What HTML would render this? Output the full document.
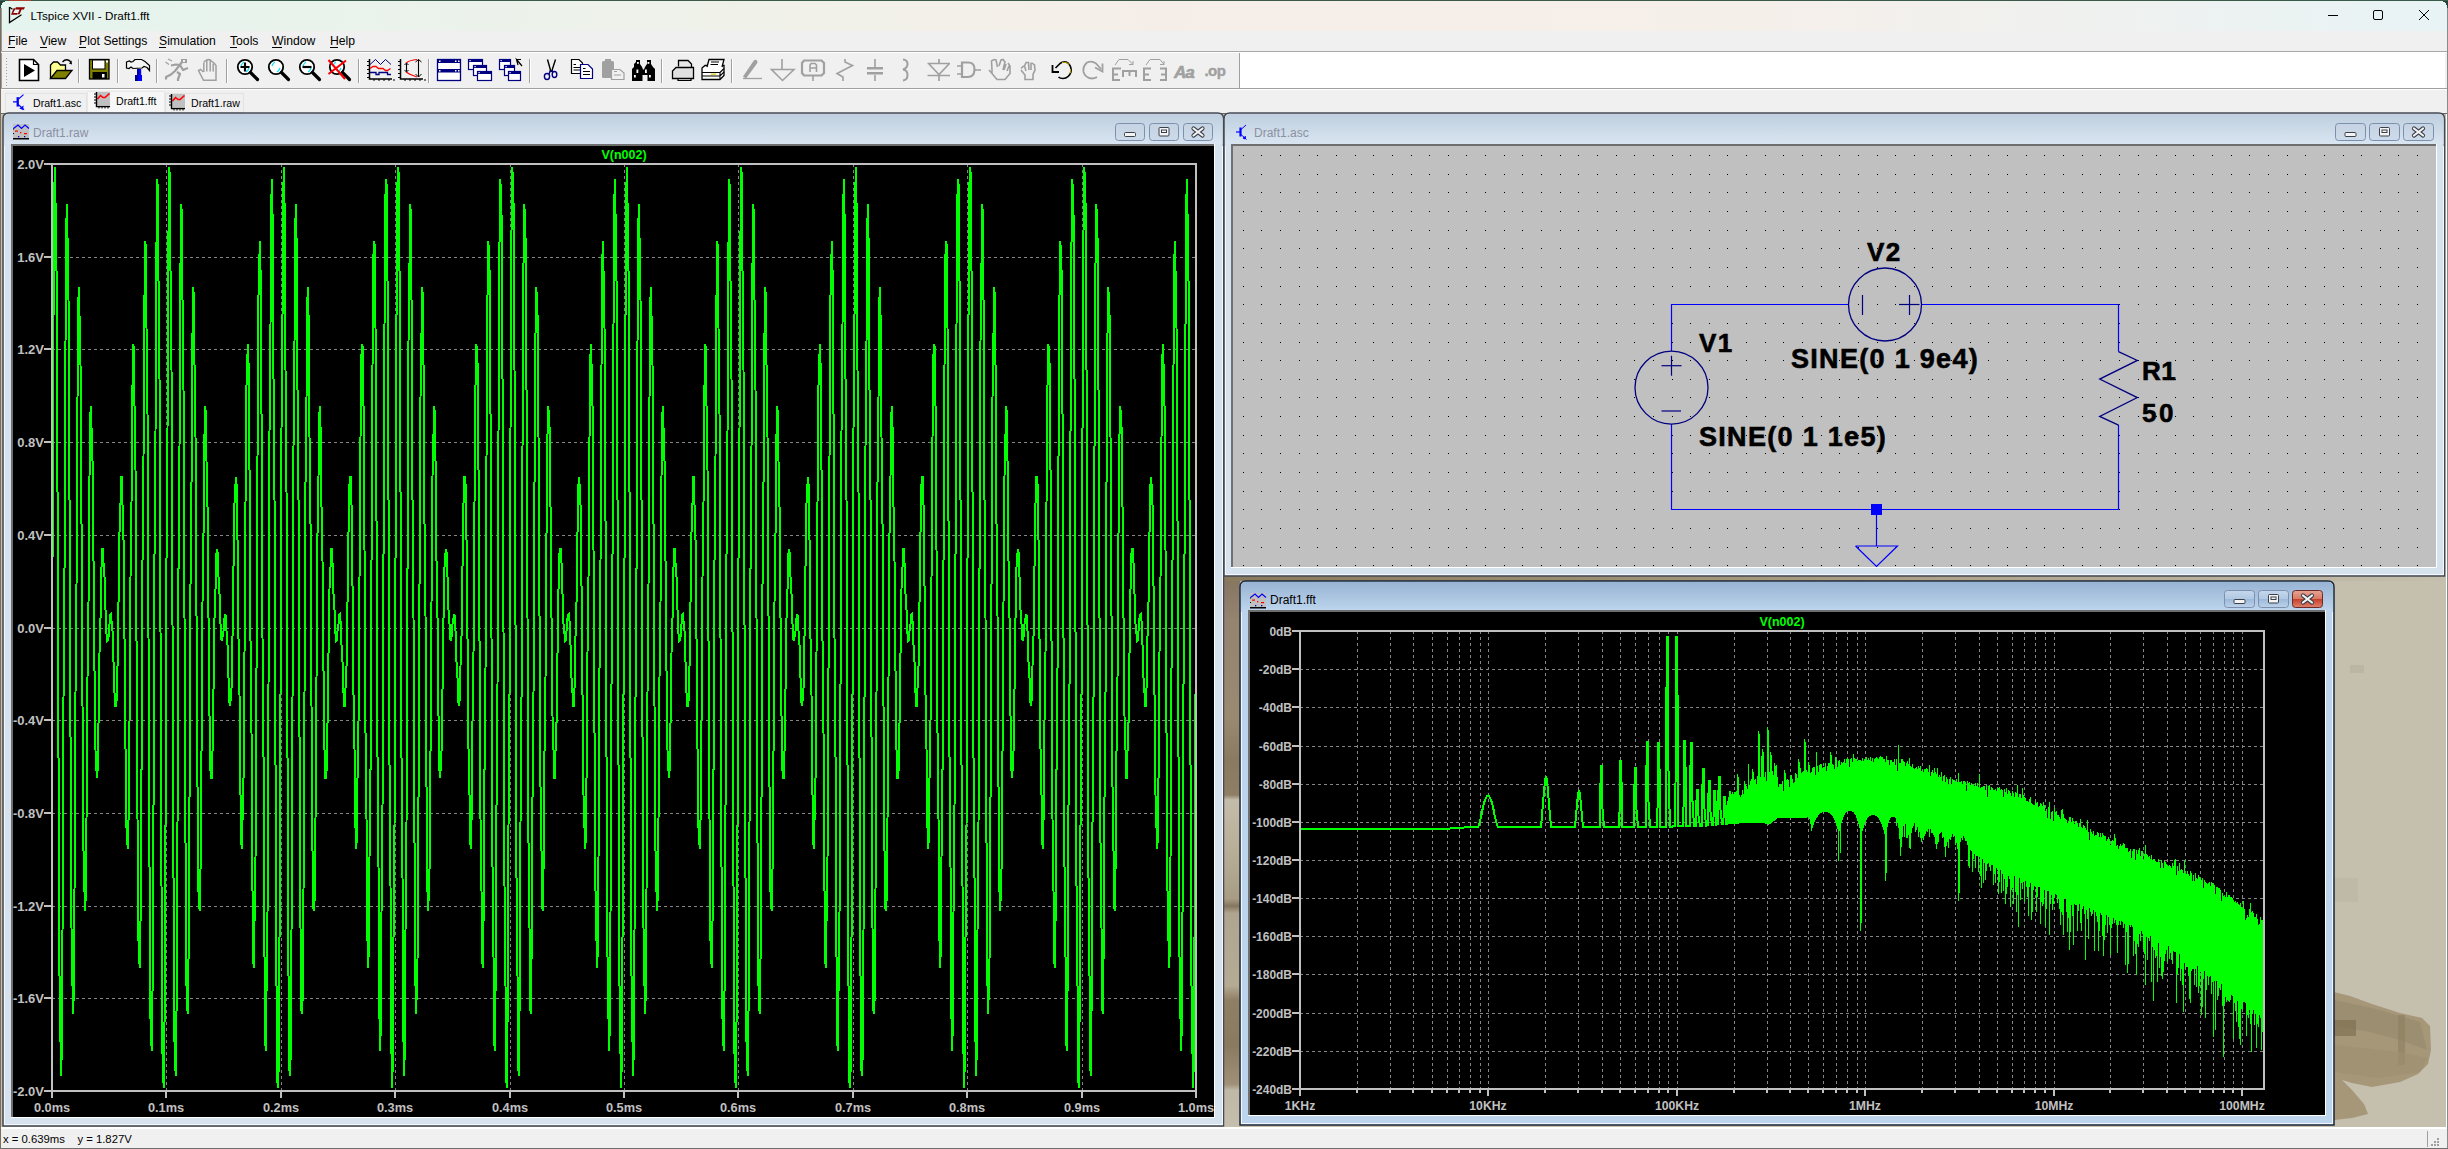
<!DOCTYPE html><html><head><meta charset="utf-8"><style>html,body{margin:0;padding:0;width:2448px;height:1149px;overflow:hidden;background:#26453a}svg{display:block}text{font-family:"Liberation Sans",sans-serif}</style></head><body>
<svg width="2448" height="1149" viewBox="0 0 2448 1149" shape-rendering="crispEdges">
<defs>
<linearGradient id="gTitle" x1="0" x2="1" y1="0" y2="0">
 <stop offset="0" stop-color="#e4f4ee"/><stop offset="0.25" stop-color="#eef2ea"/><stop offset="0.5" stop-color="#f6eee8"/><stop offset="0.72" stop-color="#f5efea"/><stop offset="1" stop-color="#e8f3f5"/>
</linearGradient>
<linearGradient id="gInact" x1="0" x2="0" y1="0" y2="1">
 <stop offset="0" stop-color="#bfcfdf"/><stop offset="1" stop-color="#d9e5f1"/>
</linearGradient>
<linearGradient id="gInactFrame" x1="0" x2="0" y1="0" y2="1">
 <stop offset="0" stop-color="#d2deea"/><stop offset="1" stop-color="#dae6f2"/>
</linearGradient>
<linearGradient id="gAct" x1="0" x2="0" y1="0" y2="1">
 <stop offset="0" stop-color="#98b4d4"/><stop offset="1" stop-color="#bcd4ec"/>
</linearGradient>
<linearGradient id="gBtn" x1="0" x2="0" y1="0" y2="1">
 <stop offset="0" stop-color="#c6d3e2"/><stop offset="1" stop-color="#ccdaea"/>
</linearGradient>
<linearGradient id="gBtnA" x1="0" x2="0" y1="0" y2="1">
 <stop offset="0" stop-color="#c5d8ec"/><stop offset="0.5" stop-color="#b0c8e2"/><stop offset="0.51" stop-color="#9db9d9"/><stop offset="1" stop-color="#bcd2ea"/>
</linearGradient>
<linearGradient id="gClose" x1="0" x2="0" y1="0" y2="1">
 <stop offset="0" stop-color="#e8a596"/><stop offset="0.5" stop-color="#d97a62"/><stop offset="0.51" stop-color="#c5402a"/><stop offset="1" stop-color="#e0826c"/>
</linearGradient>
<pattern id="dots" x="1243" y="155" width="18.64" height="18.64" patternUnits="userSpaceOnUse">
 <rect x="0" y="0" width="2" height="2" fill="#000"/>
</pattern>
</defs>
<rect x="0" y="0" width="2448" height="1" fill="#3a5a4a"/>
<rect x="9.0" y="0" width="22" height="1" fill="#b04030"/>
<path d="M1,8 Q1,1 8,1 L2440,1 Q2447,1 2447,8 L2447,1148 L1,1148 Z" fill="#f0f0f0"/>
<path d="M1,8 Q1,1 8,1 L2440,1 Q2447,1 2447,8 L2447,31 L1,31 Z" fill="url(#gTitle)"/>
<rect x="0" y="8" width="1" height="1141" fill="#7c6e5c"/>
<rect x="1" y="8" width="1" height="1140" fill="#9a9a9a"/>
<rect x="2447" y="8" width="1" height="1141" fill="#8a8a8a"/>
<path d="M9.5,7 V22.5 L21.5,14.8" fill="none" stroke="#000" stroke-width="1.3" shape-rendering="auto"/>
<path d="M9.5,7.2 L12.5,9.2" fill="none" stroke="#000" stroke-width="1.2" shape-rendering="auto"/>
<path d="M13.6,8.2 L15.6,8.2 L13.2,13 L17.8,13 L17.2,14.8 L11,14.8 Z" fill="#8b0000" shape-rendering="auto"/>
<path d="M15.8,7.2 L25,7.2 L23.8,9.4 L21.6,9.4 L19.6,14.2 L17.6,14.2 L19.6,9.4 L15.2,9.4 Z" fill="#8b0000" shape-rendering="auto"/>
<text x="30.5" y="20" font-size="11.7" fill="#000">LTspice XVII - Draft1.fft</text>
<rect x="2328" y="15" width="10" height="1" fill="#000"/>
<rect x="2373.5" y="10.5" width="9" height="9" rx="1.5" fill="none" stroke="#000" stroke-width="1" shape-rendering="auto"/>
<path d="M2419,10 L2429,20 M2429,10 L2419,20" stroke="#000" stroke-width="1" shape-rendering="auto"/>
<text x="8" y="45" font-size="12.2" fill="#000">File</text>
<rect x="8" y="47" width="7" height="1" fill="#000"/>
<text x="40" y="45" font-size="12.2" fill="#000">View</text>
<rect x="40" y="47" width="7" height="1" fill="#000"/>
<text x="79" y="45" font-size="12.2" fill="#000">Plot Settings</text>
<rect x="79" y="47" width="7" height="1" fill="#000"/>
<text x="159" y="45" font-size="12.2" fill="#000">Simulation</text>
<rect x="159" y="47" width="7" height="1" fill="#000"/>
<text x="230" y="45" font-size="12.2" fill="#000">Tools</text>
<rect x="230" y="47" width="7" height="1" fill="#000"/>
<text x="272" y="45" font-size="12.2" fill="#000">Window</text>
<rect x="272" y="47" width="10" height="1" fill="#000"/>
<text x="330" y="45" font-size="12.2" fill="#000">Help</text>
<rect x="330" y="47" width="8" height="1" fill="#000"/>
<rect x="1" y="51" width="2446" height="1" fill="#a8a8a8"/>
<rect x="1" y="52" width="2446" height="1" fill="#ffffff"/>
<rect x="1" y="88" width="2446" height="1" fill="#a0a0a0"/>
<rect x="1" y="89" width="2446" height="1" fill="#ffffff"/>
<rect x="1240" y="52" width="1205" height="36" fill="#ffffff"/>
<rect x="1239" y="53" width="1" height="35" fill="#a0a0a0"/>
<rect x="6" y="58" width="1" height="1" fill="#a0a0a0"/>
<rect x="6" y="61" width="1" height="1" fill="#a0a0a0"/>
<rect x="6" y="64" width="1" height="1" fill="#a0a0a0"/>
<rect x="6" y="67" width="1" height="1" fill="#a0a0a0"/>
<rect x="6" y="70" width="1" height="1" fill="#a0a0a0"/>
<rect x="6" y="73" width="1" height="1" fill="#a0a0a0"/>
<rect x="6" y="76" width="1" height="1" fill="#a0a0a0"/>
<rect x="6" y="79" width="1" height="1" fill="#a0a0a0"/>
<rect x="6" y="82" width="1" height="1" fill="#a0a0a0"/>
<rect x="6" y="85" width="1" height="1" fill="#a0a0a0"/>
<rect x="78" y="59" width="1" height="24" fill="#a0a0a0"/>
<rect x="79" y="59" width="1" height="24" fill="#ffffff"/>
<rect x="117" y="59" width="1" height="24" fill="#a0a0a0"/>
<rect x="118" y="59" width="1" height="24" fill="#ffffff"/>
<rect x="156" y="59" width="1" height="24" fill="#a0a0a0"/>
<rect x="157" y="59" width="1" height="24" fill="#ffffff"/>
<rect x="226" y="59" width="1" height="24" fill="#a0a0a0"/>
<rect x="227" y="59" width="1" height="24" fill="#ffffff"/>
<rect x="358" y="59" width="1" height="24" fill="#a0a0a0"/>
<rect x="359" y="59" width="1" height="24" fill="#ffffff"/>
<rect x="428" y="59" width="1" height="24" fill="#a0a0a0"/>
<rect x="429" y="59" width="1" height="24" fill="#ffffff"/>
<rect x="529" y="59" width="1" height="24" fill="#a0a0a0"/>
<rect x="530" y="59" width="1" height="24" fill="#ffffff"/>
<rect x="661" y="59" width="1" height="24" fill="#a0a0a0"/>
<rect x="662" y="59" width="1" height="24" fill="#ffffff"/>
<rect x="731" y="59" width="1" height="24" fill="#a0a0a0"/>
<rect x="732" y="59" width="1" height="24" fill="#ffffff"/>
<rect x="1" y="90" width="2446" height="23" fill="#f0f0f0"/>
<rect x="1" y="113" width="2446" height="1" fill="#6a6a6a"/>
<rect x="5" y="93" width="81" height="19" fill="#f0f0f0" stroke="#e2e2e2"/>
<rect x="87" y="91" width="77" height="21" fill="#f7f7f7" stroke="#e8e8e8"/>
<rect x="165" y="93" width="78" height="19" fill="#f0f0f0" stroke="#e2e2e2"/>
<text x="33" y="107" font-size="10.6" fill="#000">Draft1.asc</text>
<text x="116" y="105" font-size="10.6" fill="#000">Draft1.fft</text>
<text x="191" y="107" font-size="10.6" fill="#000">Draft1.raw</text>
<defs><linearGradient id="gStrip" x1="0" x2="0" y1="0" y2="1">
<stop offset="0" stop-color="#857560"/><stop offset="0.08" stop-color="#948470"/><stop offset="0.255" stop-color="#9a8a72"/>
<stop offset="0.335" stop-color="#8a7a62"/><stop offset="0.398" stop-color="#8e7e66"/><stop offset="0.407" stop-color="#c4bcaa"/>
<stop offset="0.5" stop-color="#b8ae98"/><stop offset="0.587" stop-color="#a89c84"/><stop offset="0.6" stop-color="#857560"/>
<stop offset="0.613" stop-color="#b0a590"/><stop offset="0.745" stop-color="#b5aa94"/><stop offset="0.771" stop-color="#8f7f65"/>
<stop offset="0.853" stop-color="#8a7a60"/><stop offset="0.924" stop-color="#a09078"/><stop offset="0.935" stop-color="#c0b8a6"/><stop offset="1" stop-color="#c4bead"/></linearGradient>
<linearGradient id="gStripH" x1="0" x2="1" y1="0" y2="0">
<stop offset="0" stop-color="#8a7a5e"/><stop offset="0.3" stop-color="#9c8e74"/><stop offset="0.6" stop-color="#b0a48c"/><stop offset="1" stop-color="#c4bead"/></linearGradient>
<radialGradient id="gBlob" cx="0.5" cy="0.5" r="0.5"><stop offset="0" stop-color="#8a7a5a"/><stop offset="0.7" stop-color="#9c8d6e"/><stop offset="1" stop-color="#b5aa90"/></radialGradient>
</defs>
<rect x="1" y="114" width="2446" height="1013" fill="#c5bfae"/>
<rect x="1224" y="576" width="16" height="550" fill="url(#gStrip)"/>
<rect x="2446" y="114" width="1" height="1013" fill="#ffffff"/>
<rect x="1225" y="576" width="1220" height="5" fill="url(#gStripH)"/>
<path d="M2334,992 L2350,996 L2372,1004 L2400,1013 L2422,1018 L2430,1026 L2431,1050 L2428,1064 L2418,1074 L2400,1082 L2372,1087 L2352,1083 L2342,1080 L2352,1090 L2364,1104 L2368,1114 L2352,1118 L2334,1120 Z" fill="#a69779" shape-rendering="auto"/>
<path d="M2334,1000 L2372,1008 L2400,1016 L2420,1022 L2427,1050 L2400,1040 L2370,1032 L2334,1026 Z" fill="#998a6c" opacity="0.7" shape-rendering="auto"/>
<rect x="2334" y="1020" width="22" height="16" fill="#7c6a4c" opacity="0.6" shape-rendering="auto"/>
<rect x="2398" y="1015" width="7" height="50" fill="#8a7a5c" opacity="0.5" shape-rendering="auto"/>
<path d="M2334,1045 L2400,1052 L2428,1058 L2420,1072 L2380,1078 L2334,1072 Z" fill="#9e8f70" opacity="0.6" shape-rendering="auto"/>
<rect x="2334" y="878" width="24" height="24" fill="#bbb5a4" opacity="0.6" shape-rendering="auto"/>
<rect x="2350" y="665" width="14" height="8" fill="#b2ab9a" opacity="0.5"/>
<rect x="1" y="1127" width="2446" height="2" fill="#ffffff"/>
<rect x="1" y="1129" width="2446" height="19" fill="#f0f0f0"/>
<rect x="0" y="1148" width="2448" height="1" fill="#6e6e6e"/>
<rect x="2427" y="1131" width="1" height="16" fill="#a0a0a0"/>
<text x="3" y="1143" font-size="11.3" fill="#000" xml:space="preserve">x = 0.639ms    y = 1.827V</text>
<rect x="2431" y="1144" width="2" height="2" fill="#a0a0a0"/>
<rect x="2434" y="1141" width="2" height="2" fill="#a0a0a0"/>
<rect x="2434" y="1144" width="2" height="2" fill="#a0a0a0"/>
<rect x="2437" y="1138" width="2" height="2" fill="#a0a0a0"/>
<rect x="2437" y="1141" width="2" height="2" fill="#a0a0a0"/>
<rect x="2437" y="1144" width="2" height="2" fill="#a0a0a0"/>
<path d="M3,1126 L3,119 Q3,113 9,113 L1217.5,113 Q1223.5,113 1223.5,119 L1223.5,1126 Z" fill="#d6e2ee" stroke="#454a52" stroke-width="1.5" shape-rendering="auto"/>
<path d="M4,144 L4,119 Q4,114 10,114 L1216.5,114 Q1222.5,114 1222.5,119 L1222.5,144 Z" fill="url(#gInact)" shape-rendering="auto"/>
<path d="M4.5,1125 L4.5,146" stroke="#f4f8fc" stroke-width="1" fill="none"/>
<path d="M1222.0,1125 L1222.0,146" stroke="#f4f8fc" stroke-width="1" fill="none"/>
<path d="M4.5,1124.5 L1222.0,1124.5" stroke="#f4f8fc" stroke-width="1" fill="none"/>
<rect x="11" y="144" width="1204" height="2" fill="#6e6e6e"/>
<rect x="11" y="144" width="2" height="973" fill="#707070"/>
<rect x="1214" y="144" width="1" height="974" fill="#ffffff"/>
<rect x="11" y="1117" width="1204" height="1" fill="#ffffff"/>
<rect x="13" y="146" width="1201" height="971" fill="#000"/>
<g transform="translate(13,124)" shape-rendering="auto"><rect x="0" y="0" width="16" height="14" fill="#c0c0c0"/><path d="M0.5,4.5 L5,1 L8.5,4.5 L12,1 L16,4.5" fill="none" stroke="#0000ff" stroke-width="1.2"/><rect x="2" y="6.5" width="3" height="1.2" fill="#ff0000"/><rect x="7" y="8" width="1.3" height="1.3" fill="#ff0000"/><rect x="11" y="9" width="3" height="1.2" fill="#ff0000"/><rect x="5" y="12" width="1.3" height="1.3" fill="#0000aa"/><rect x="11" y="12" width="1.3" height="1.3" fill="#0000aa"/><rect x="0" y="4.5" width="1" height="1" fill="#000"/><rect x="0" y="9" width="1" height="1" fill="#000"/><rect x="0" y="14" width="16" height="1.5" fill="#000"/></g>
<rect x="1115.5" y="123.5" width="29" height="17" rx="3" fill="url(#gBtn)" stroke="#7d8fae" stroke-width="1" shape-rendering="auto"/>
<rect x="1124.5" y="132.5" width="11" height="4" rx="1" fill="#f4f4f4" stroke="#3a3f4a" stroke-width="1" shape-rendering="auto"/>
<rect x="1149.5" y="123.5" width="29" height="17" rx="3" fill="url(#gBtn)" stroke="#7d8fae" stroke-width="1" shape-rendering="auto"/>
<rect x="1159.0" y="127.5" width="10" height="8.5" rx="1" fill="#f4f4f4" stroke="#3a3f4a" stroke-width="1" shape-rendering="auto"/>
<rect x="1161.5" y="130.0" width="5" height="2.5" fill="none" stroke="#3a3f4a" stroke-width="1" shape-rendering="auto"/>
<rect x="1183.5" y="123.5" width="29" height="17" rx="3" fill="url(#gBtn)" stroke="#7d8fae" stroke-width="1" shape-rendering="auto"/>
<path d="M1193.5,128.5 L1202.5,135.5 M1202.5,128.5 L1193.5,135.5" stroke="#3a3f4a" stroke-width="4.2" stroke-linecap="round" shape-rendering="auto"/>
<path d="M1193.5,128.5 L1202.5,135.5 M1202.5,128.5 L1193.5,135.5" stroke="#f4f4f4" stroke-width="2.2" stroke-linecap="round" shape-rendering="auto"/>
<text x="33" y="137" font-size="12" fill="#8c90a0">Draft1.raw</text>
<path d="M1224,576 L1224,119 Q1224,113 1230,113 L2438.5,113 Q2444.5,113 2444.5,119 L2444.5,576 Z" fill="#d6e2ee" stroke="#454a52" stroke-width="1.5" shape-rendering="auto"/>
<path d="M1225,144 L1225,119 Q1225,114 1231,114 L2437.5,114 Q2443.5,114 2443.5,119 L2443.5,144 Z" fill="url(#gInact)" shape-rendering="auto"/>
<path d="M1225.5,575 L1225.5,146" stroke="#f4f8fc" stroke-width="1" fill="none"/>
<path d="M2443.0,575 L2443.0,146" stroke="#f4f8fc" stroke-width="1" fill="none"/>
<path d="M1225.5,574.5 L2443.0,574.5" stroke="#f4f8fc" stroke-width="1" fill="none"/>
<rect x="1231" y="144" width="1206" height="2" fill="#6e6e6e"/>
<rect x="1231" y="144" width="2" height="423" fill="#707070"/>
<rect x="2436" y="144" width="1" height="424" fill="#ffffff"/>
<rect x="1231" y="567" width="1206" height="1" fill="#ffffff"/>
<rect x="1233" y="146" width="1203" height="421" fill="#c0c0c0"/>
<g transform="translate(1236,124.5) scale(1)" shape-rendering="auto" stroke="#0000ff" fill="none"><path d="M0,7.5 L4,7.5" stroke-width="1.2"/><path d="M4.5,3 L4.5,12" stroke-width="2.2"/><path d="M5,5 L10,0.5" stroke-width="1"/><path d="M5,10 L10.5,15" stroke-width="1"/><path d="M7,13.5 L9.5,12 L9,14.5 Z" fill="#0000ff" stroke-width="1"/></g>
<rect x="2335.5" y="123.5" width="30" height="17" rx="3" fill="url(#gBtn)" stroke="#7d8fae" stroke-width="1" shape-rendering="auto"/>
<rect x="2345.0" y="132.5" width="11" height="4" rx="1" fill="#f4f4f4" stroke="#3a3f4a" stroke-width="1" shape-rendering="auto"/>
<rect x="2369.5" y="123.5" width="30" height="17" rx="3" fill="url(#gBtn)" stroke="#7d8fae" stroke-width="1" shape-rendering="auto"/>
<rect x="2379.5" y="127.5" width="10" height="8.5" rx="1" fill="#f4f4f4" stroke="#3a3f4a" stroke-width="1" shape-rendering="auto"/>
<rect x="2382.0" y="130.0" width="5" height="2.5" fill="none" stroke="#3a3f4a" stroke-width="1" shape-rendering="auto"/>
<rect x="2403.5" y="123.5" width="30" height="17" rx="3" fill="url(#gBtn)" stroke="#7d8fae" stroke-width="1" shape-rendering="auto"/>
<path d="M2414.0,128.5 L2423.0,135.5 M2423.0,128.5 L2414.0,135.5" stroke="#3a3f4a" stroke-width="4.2" stroke-linecap="round" shape-rendering="auto"/>
<path d="M2414.0,128.5 L2423.0,135.5 M2423.0,128.5 L2414.0,135.5" stroke="#f4f4f4" stroke-width="2.2" stroke-linecap="round" shape-rendering="auto"/>
<text x="1254" y="137" font-size="12" fill="#8c90a0">Draft1.asc</text>
<path d="M1240,1125 L1240,587 Q1240,581 1246,581 L2328,581 Q2334,581 2334,587 L2334,1125 Z" fill="#bcd4ec" stroke="#1e2a3a" stroke-width="1.5" shape-rendering="auto"/>
<path d="M1241,610 L1241,587 Q1241,582 1247,582 L2327,582 Q2333,582 2333,587 L2333,610 Z" fill="url(#gAct)" shape-rendering="auto"/>
<path d="M1241.5,1124 L1241.5,612" stroke="#f4f8fc" stroke-width="1" fill="none"/>
<path d="M2332.5,1124 L2332.5,612" stroke="#f4f8fc" stroke-width="1" fill="none"/>
<path d="M1241.5,1123.5 L2332.5,1123.5" stroke="#f4f8fc" stroke-width="1" fill="none"/>
<rect x="1248" y="610" width="1078" height="2" fill="#6e6e6e"/>
<rect x="1248" y="610" width="2" height="505" fill="#707070"/>
<rect x="2325" y="610" width="1" height="506" fill="#ffffff"/>
<rect x="1248" y="1115" width="1078" height="1" fill="#ffffff"/>
<rect x="1250" y="612" width="1075" height="503" fill="#000"/>
<g transform="translate(1250,593)" shape-rendering="auto"><rect x="0" y="0" width="16" height="14" fill="#c0c0c0"/><path d="M0.5,4.5 L5,1 L8.5,4.5 L12,1 L16,4.5" fill="none" stroke="#0000ff" stroke-width="1.2"/><rect x="2" y="6.5" width="3" height="1.2" fill="#ff0000"/><rect x="7" y="8" width="1.3" height="1.3" fill="#ff0000"/><rect x="11" y="9" width="3" height="1.2" fill="#ff0000"/><rect x="5" y="12" width="1.3" height="1.3" fill="#0000aa"/><rect x="11" y="12" width="1.3" height="1.3" fill="#0000aa"/><rect x="0" y="4.5" width="1" height="1" fill="#000"/><rect x="0" y="9" width="1" height="1" fill="#000"/><rect x="0" y="14" width="16" height="1.5" fill="#000"/></g>
<rect x="2224.5" y="590.5" width="30" height="17" rx="3" fill="url(#gBtnA)" stroke="#7d8fae" stroke-width="1" shape-rendering="auto"/>
<rect x="2234.0" y="599.5" width="11" height="4" rx="1" fill="#f4f4f4" stroke="#3a3f4a" stroke-width="1" shape-rendering="auto"/>
<rect x="2258.5" y="590.5" width="30" height="17" rx="3" fill="url(#gBtnA)" stroke="#7d8fae" stroke-width="1" shape-rendering="auto"/>
<rect x="2268.5" y="594.5" width="10" height="8.5" rx="1" fill="#f4f4f4" stroke="#3a3f4a" stroke-width="1" shape-rendering="auto"/>
<rect x="2271.0" y="597.0" width="5" height="2.5" fill="none" stroke="#3a3f4a" stroke-width="1" shape-rendering="auto"/>
<rect x="2292.5" y="590.5" width="30" height="17" rx="3" fill="url(#gClose)" stroke="#6b2a2a" stroke-width="1" shape-rendering="auto"/>
<path d="M2303.0,595.5 L2312.0,602.5 M2312.0,595.5 L2303.0,602.5" stroke="#3a3f4a" stroke-width="4.2" stroke-linecap="round" shape-rendering="auto"/>
<path d="M2303.0,595.5 L2312.0,602.5 M2312.0,595.5 L2303.0,602.5" stroke="#f4f4f4" stroke-width="2.2" stroke-linecap="round" shape-rendering="auto"/>
<text x="1270" y="604" font-size="12" fill="#000">Draft1.fft</text>
<g transform="translate(13,94) scale(1.05)" shape-rendering="auto" stroke="#0000ff" fill="none"><path d="M0,7.5 L4,7.5" stroke-width="1.2"/><path d="M4.5,3 L4.5,12" stroke-width="2.2"/><path d="M5,5 L10,0.5" stroke-width="1"/><path d="M5,10 L10.5,15" stroke-width="1"/><path d="M7,13.5 L9.5,12 L9,14.5 Z" fill="#0000ff" stroke-width="1"/></g>
<g transform="translate(94,92)" shape-rendering="auto"><rect x="3" y="0" width="13" height="13" fill="#c0c0c0"/><path d="M3.5,7 L6.5,3.5 L9,5.5 L11,5.5 L15.5,1.5" fill="none" stroke="#ff0000" stroke-width="1.6"/><path d="M2.5,0 V14.5 H16" fill="none" stroke="#000" stroke-width="1.4"/><path d="M0,2 H2 M0,5 H2 M0,8 H2 M0,11 H2 M5,15 V16.5 M8,15 V16.5 M11,15 V16.5 M14,15 V16.5" stroke="#000" stroke-width="1"/></g>
<g transform="translate(169,94)" shape-rendering="auto"><rect x="3" y="0" width="13" height="13" fill="#c0c0c0"/><path d="M3.5,7 L6.5,3.5 L9,5.5 L11,5.5 L15.5,1.5" fill="none" stroke="#ff0000" stroke-width="1.6"/><path d="M2.5,0 V14.5 H16" fill="none" stroke="#000" stroke-width="1.4"/><path d="M0,2 H2 M0,5 H2 M0,8 H2 M0,11 H2 M5,15 V16.5 M8,15 V16.5 M11,15 V16.5 M14,15 V16.5" stroke="#000" stroke-width="1"/></g>
<line x1="52" y1="257.5" x2="1196" y2="257.5" stroke="#868686" stroke-width="1" stroke-dasharray="3 3"/>
<line x1="52" y1="349.5" x2="1196" y2="349.5" stroke="#868686" stroke-width="1" stroke-dasharray="3 3"/>
<line x1="52" y1="442.5" x2="1196" y2="442.5" stroke="#868686" stroke-width="1" stroke-dasharray="3 3"/>
<line x1="52" y1="535.5" x2="1196" y2="535.5" stroke="#868686" stroke-width="1" stroke-dasharray="3 3"/>
<line x1="52" y1="628.5" x2="1196" y2="628.5" stroke="#868686" stroke-width="1" stroke-dasharray="3 3"/>
<line x1="52" y1="720.5" x2="1196" y2="720.5" stroke="#868686" stroke-width="1" stroke-dasharray="3 3"/>
<line x1="52" y1="813.5" x2="1196" y2="813.5" stroke="#868686" stroke-width="1" stroke-dasharray="3 3"/>
<line x1="52" y1="906.5" x2="1196" y2="906.5" stroke="#868686" stroke-width="1" stroke-dasharray="3 3"/>
<line x1="52" y1="998.5" x2="1196" y2="998.5" stroke="#868686" stroke-width="1" stroke-dasharray="3 3"/>
<line x1="166.5" y1="164" x2="166.5" y2="1091" stroke="#868686" stroke-width="1" stroke-dasharray="3 3"/>
<line x1="281.5" y1="164" x2="281.5" y2="1091" stroke="#868686" stroke-width="1" stroke-dasharray="3 3"/>
<line x1="395.5" y1="164" x2="395.5" y2="1091" stroke="#868686" stroke-width="1" stroke-dasharray="3 3"/>
<line x1="510.5" y1="164" x2="510.5" y2="1091" stroke="#868686" stroke-width="1" stroke-dasharray="3 3"/>
<line x1="624.5" y1="164" x2="624.5" y2="1091" stroke="#868686" stroke-width="1" stroke-dasharray="3 3"/>
<line x1="738.5" y1="164" x2="738.5" y2="1091" stroke="#868686" stroke-width="1" stroke-dasharray="3 3"/>
<line x1="853.5" y1="164" x2="853.5" y2="1091" stroke="#868686" stroke-width="1" stroke-dasharray="3 3"/>
<line x1="967.5" y1="164" x2="967.5" y2="1091" stroke="#868686" stroke-width="1" stroke-dasharray="3 3"/>
<line x1="1082.5" y1="164" x2="1082.5" y2="1091" stroke="#868686" stroke-width="1" stroke-dasharray="3 3"/>
<path d="M52,628 L53,491 L53,367 L54,266 L54,197 L55,167 L55,177 L56,227 L57,313 L57,426 L58,556 L58,692 L59,821 L59,933 L60,1017 L61,1066 L61,1076 L62,1046 L62,979 L63,882 L63,764 L64,634 L65,506 L65,389 L66,295 L66,232 L67,204 L67,214 L68,260 L69,338 L69,440 L70,557 L70,678 L71,793 L71,891 L72,964 L73,1007 L73,1014 L74,988 L74,931 L75,848 L75,748 L76,639 L77,532 L77,436 L78,359 L78,308 L79,287 L79,296 L80,333 L81,396 L81,477 L82,568 L82,662 L83,749 L83,823 L84,877 L85,907 L85,911 L86,891 L86,848 L87,788 L87,716 L88,639 L89,566 L89,501 L90,451 L90,418 L91,406 L91,414 L92,440 L93,481 L93,532 L94,589 L94,645 L95,695 L95,736 L96,764 L97,778 L98,764 L98,739 L99,707 L99,671 L100,635 L101,602 L101,576 L102,558 L102,549 L103,549 L103,556 L104,569 L105,585 L105,602 L106,618 L106,630 L107,638 L107,641 L108,640 L109,634 L109,628 L110,621 L110,615 L111,614 L111,617 L112,625 L113,637 L113,653 L114,670 L114,686 L115,699 L115,706 L116,706 L117,697 L117,679 L118,653 L118,620 L119,584 L119,548 L120,516 L121,491 L121,477 L122,477 L122,491 L123,519 L124,560 L124,610 L125,666 L125,723 L126,774 L126,815 L127,841 L128,849 L128,837 L129,804 L129,754 L130,689 L130,616 L131,539 L132,467 L132,407 L133,364 L133,344 L134,348 L134,378 L135,432 L136,506 L136,593 L137,687 L137,778 L138,859 L138,922 L139,959 L140,968 L140,947 L141,896 L141,819 L142,723 L142,616 L143,507 L144,407 L144,324 L145,267 L145,241 L146,248 L146,291 L147,364 L148,462 L148,577 L149,698 L149,815 L150,917 L150,995 L151,1041 L152,1051 L152,1023 L153,960 L153,866 L154,749 L154,621 L155,491 L156,373 L156,276 L157,209 L157,179 L158,189 L158,238 L159,322 L160,434 L160,563 L161,699 L161,829 L162,942 L162,1028 L163,1078 L164,1088 L164,1058 L165,989 L165,888 L166,764 L166,628 L167,491 L168,367 L168,266 L169,197 L169,167 L170,177 L170,227 L171,313 L172,426 L172,556 L173,692 L173,821 L174,933 L174,1017 L175,1066 L176,1076 L176,1046 L177,979 L177,882 L178,764 L178,634 L179,506 L180,389 L180,295 L181,232 L181,204 L182,214 L182,260 L183,338 L184,440 L184,557 L185,678 L185,793 L186,891 L186,964 L187,1007 L188,1014 L188,988 L189,931 L189,848 L190,748 L190,639 L191,532 L192,436 L192,359 L193,308 L193,287 L194,296 L194,333 L195,396 L196,477 L196,568 L197,662 L197,749 L198,823 L198,877 L199,907 L200,911 L200,891 L201,848 L201,788 L202,716 L202,639 L203,566 L204,501 L204,451 L205,418 L205,406 L206,414 L206,440 L207,481 L208,532 L208,589 L209,645 L209,695 L210,736 L210,764 L211,778 L212,778 L212,764 L213,739 L213,707 L214,671 L214,635 L215,602 L216,576 L216,558 L217,549 L218,556 L218,569 L219,585 L220,602 L220,618 L221,630 L221,638 L222,641 L222,640 L223,634 L224,628 L224,621 L225,615 L225,614 L226,617 L226,625 L227,637 L228,653 L228,670 L229,686 L229,699 L230,706 L231,697 L232,679 L232,653 L233,620 L233,584 L234,548 L234,516 L235,491 L236,477 L237,491 L237,519 L238,560 L238,610 L239,666 L240,723 L240,774 L241,815 L241,841 L242,849 L242,837 L243,804 L244,754 L244,689 L245,616 L245,539 L246,467 L246,407 L247,364 L248,344 L248,348 L249,378 L249,432 L250,506 L250,593 L251,687 L252,778 L252,859 L253,922 L253,959 L254,968 L254,947 L255,896 L256,819 L256,723 L257,616 L257,507 L258,407 L258,324 L259,267 L260,241 L260,248 L261,291 L261,364 L262,462 L262,577 L263,698 L264,815 L264,917 L265,995 L265,1041 L266,1051 L266,1023 L267,960 L268,866 L268,749 L269,621 L269,491 L270,373 L271,276 L271,209 L272,179 L272,189 L273,238 L273,322 L274,434 L275,563 L275,699 L276,829 L276,942 L277,1028 L277,1078 L278,1088 L279,1058 L279,989 L280,888 L280,764 L281,628 L281,491 L282,367 L283,266 L283,197 L284,167 L284,177 L285,227 L285,313 L286,426 L287,556 L287,692 L288,821 L288,933 L289,1017 L289,1066 L290,1076 L291,1046 L291,979 L292,882 L292,764 L293,634 L293,506 L294,389 L295,295 L295,232 L296,204 L296,214 L297,260 L297,338 L298,440 L299,557 L299,678 L300,793 L300,891 L301,964 L301,1007 L302,1014 L303,988 L303,931 L304,848 L304,748 L305,639 L305,532 L306,436 L307,359 L307,308 L308,287 L308,296 L309,333 L309,396 L310,477 L311,568 L311,662 L312,749 L312,823 L313,877 L313,907 L314,911 L315,891 L315,848 L316,788 L316,716 L317,639 L317,566 L318,501 L319,451 L319,418 L320,406 L320,414 L321,440 L321,481 L322,532 L323,589 L323,645 L324,695 L324,736 L325,764 L325,778 L326,778 L327,764 L327,739 L328,707 L328,671 L329,635 L329,602 L330,576 L331,558 L331,549 L332,549 L332,556 L333,569 L333,585 L334,602 L335,618 L335,630 L336,638 L336,641 L337,640 L337,634 L338,628 L339,621 L339,615 L340,614 L340,617 L341,625 L341,637 L342,653 L343,670 L343,686 L344,699 L344,706 L345,706 L345,697 L346,679 L347,653 L347,620 L348,584 L348,548 L349,516 L349,491 L350,477 L351,477 L351,491 L352,519 L352,560 L353,610 L353,666 L354,723 L355,774 L355,815 L356,841 L356,849 L357,837 L357,804 L358,754 L359,689 L359,616 L360,539 L360,467 L361,407 L361,364 L362,344 L363,348 L363,378 L364,432 L364,506 L365,593 L365,687 L366,778 L367,859 L367,922 L368,959 L368,968 L369,947 L369,896 L370,819 L371,723 L371,616 L372,507 L372,407 L373,324 L373,267 L374,241 L375,248 L375,291 L376,364 L376,462 L377,577 L377,698 L378,815 L379,917 L379,995 L380,1041 L380,1051 L381,1023 L381,960 L382,866 L383,749 L383,621 L384,491 L384,373 L385,276 L385,209 L386,179 L387,189 L387,238 L388,322 L388,434 L389,563 L389,699 L390,829 L391,942 L391,1028 L392,1078 L392,1088 L393,1058 L393,989 L394,888 L395,764 L395,628 L396,491 L396,367 L397,266 L397,197 L398,167 L399,177 L399,227 L400,313 L400,426 L401,556 L401,692 L402,821 L403,933 L403,1017 L404,1066 L404,1076 L405,1046 L405,979 L406,882 L407,764 L407,634 L408,506 L408,389 L409,295 L410,232 L410,204 L411,214 L411,260 L412,338 L412,440 L413,557 L414,678 L414,793 L415,891 L415,964 L416,1007 L416,1014 L417,988 L418,931 L418,848 L419,748 L419,639 L420,532 L420,436 L421,359 L422,308 L422,287 L423,296 L423,333 L424,396 L424,477 L425,568 L426,662 L426,749 L427,823 L427,877 L428,907 L428,911 L429,891 L430,848 L430,788 L431,716 L431,639 L432,566 L432,501 L433,451 L434,418 L434,406 L435,414 L435,440 L436,481 L436,532 L437,589 L438,645 L438,695 L439,736 L439,764 L440,778 L441,764 L442,739 L442,707 L443,671 L443,635 L444,602 L444,576 L445,558 L446,549 L447,556 L447,569 L448,585 L448,602 L449,618 L450,630 L450,638 L451,641 L451,640 L452,634 L452,628 L453,621 L454,615 L454,614 L455,617 L455,625 L456,637 L456,653 L457,670 L458,686 L458,699 L459,706 L460,697 L460,679 L461,653 L462,620 L462,584 L463,548 L463,516 L464,491 L464,477 L465,477 L466,491 L466,519 L467,560 L467,610 L468,666 L468,723 L469,774 L470,815 L470,841 L471,849 L471,837 L472,804 L472,754 L473,689 L474,616 L474,539 L475,467 L475,407 L476,364 L476,344 L477,348 L478,378 L478,432 L479,506 L479,593 L480,687 L480,778 L481,859 L482,922 L482,959 L483,968 L483,947 L484,896 L484,819 L485,723 L486,616 L486,507 L487,407 L487,324 L488,267 L488,241 L489,248 L490,291 L490,364 L491,462 L491,577 L492,698 L492,815 L493,917 L494,995 L494,1041 L495,1051 L495,1023 L496,960 L496,866 L497,749 L498,621 L498,491 L499,373 L499,276 L500,209 L500,179 L501,189 L502,238 L502,322 L503,434 L503,563 L504,699 L504,829 L505,942 L506,1028 L506,1078 L507,1088 L507,1058 L508,989 L508,888 L509,764 L510,628 L510,491 L511,367 L511,266 L512,197 L512,167 L513,177 L514,227 L514,313 L515,426 L515,556 L516,692 L516,821 L517,933 L518,1017 L518,1066 L519,1076 L519,1046 L520,979 L520,882 L521,764 L522,634 L522,506 L523,389 L523,295 L524,232 L524,204 L525,214 L526,260 L526,338 L527,440 L527,557 L528,678 L528,793 L529,891 L530,964 L530,1007 L531,1014 L531,988 L532,931 L532,848 L533,748 L534,639 L534,532 L535,436 L535,359 L536,308 L536,287 L537,296 L538,333 L538,396 L539,477 L539,568 L540,662 L540,749 L541,823 L542,877 L542,907 L543,911 L543,891 L544,848 L544,788 L545,716 L546,639 L546,566 L547,501 L547,451 L548,418 L548,406 L549,414 L550,440 L550,481 L551,532 L551,589 L552,645 L552,695 L553,736 L554,764 L554,778 L555,778 L555,764 L556,739 L557,707 L557,671 L558,635 L558,602 L559,576 L559,558 L560,549 L561,549 L561,556 L562,569 L562,585 L563,602 L563,618 L564,630 L565,638 L565,641 L566,640 L566,634 L567,628 L567,621 L568,615 L569,614 L569,617 L570,625 L570,637 L571,653 L571,670 L572,686 L573,699 L573,706 L574,706 L574,697 L575,679 L575,653 L576,620 L577,584 L577,548 L578,516 L578,491 L579,477 L580,491 L581,519 L581,560 L582,610 L582,666 L583,723 L583,774 L584,815 L585,841 L585,849 L586,837 L586,804 L587,754 L587,689 L588,616 L589,539 L589,467 L590,407 L590,364 L591,344 L591,348 L592,378 L593,432 L593,506 L594,593 L594,687 L595,778 L595,859 L596,922 L597,959 L597,968 L598,947 L598,896 L599,819 L599,723 L600,616 L601,507 L601,407 L602,324 L602,267 L603,241 L603,248 L604,291 L605,364 L605,462 L606,577 L606,698 L607,815 L607,917 L608,995 L609,1041 L609,1051 L610,1023 L610,960 L611,866 L611,749 L612,621 L613,491 L613,373 L614,276 L614,209 L615,179 L615,189 L616,238 L617,322 L617,434 L618,563 L618,699 L619,829 L619,942 L620,1028 L621,1078 L621,1088 L622,1058 L622,989 L623,888 L623,764 L624,628 L625,491 L625,367 L626,266 L626,197 L627,167 L627,177 L628,227 L629,313 L629,426 L630,556 L630,692 L631,821 L631,933 L632,1017 L633,1066 L633,1076 L634,1046 L634,979 L635,882 L635,764 L636,634 L637,506 L637,389 L638,295 L638,232 L639,204 L639,214 L640,260 L641,338 L641,440 L642,557 L642,678 L643,793 L643,891 L644,964 L645,1007 L645,1014 L646,988 L646,931 L647,848 L647,748 L648,639 L649,532 L649,436 L650,359 L650,308 L651,287 L651,296 L652,333 L653,396 L653,477 L654,568 L654,662 L655,749 L655,823 L656,877 L657,907 L657,911 L658,891 L658,848 L659,788 L659,716 L660,639 L661,566 L661,501 L662,451 L662,418 L663,406 L663,414 L664,440 L665,481 L665,532 L666,589 L666,645 L667,695 L667,736 L668,764 L669,778 L670,764 L670,739 L671,707 L671,671 L672,635 L673,602 L673,576 L674,558 L674,549 L675,549 L675,556 L676,569 L677,585 L677,602 L678,618 L678,630 L679,638 L679,641 L680,640 L681,634 L681,628 L682,621 L682,615 L683,614 L683,617 L684,625 L685,637 L685,653 L686,670 L686,686 L687,699 L687,706 L688,706 L689,697 L689,679 L690,653 L690,620 L691,584 L691,548 L692,516 L693,491 L693,477 L694,477 L694,491 L695,519 L696,560 L696,610 L697,666 L697,723 L698,774 L698,815 L699,841 L700,849 L700,837 L701,804 L701,754 L702,689 L702,616 L703,539 L704,467 L704,407 L705,364 L705,344 L706,348 L706,378 L707,432 L708,506 L708,593 L709,687 L709,778 L710,859 L710,922 L711,959 L712,968 L712,947 L713,896 L713,819 L714,723 L714,616 L715,507 L716,407 L716,324 L717,267 L717,241 L718,248 L718,291 L719,364 L720,462 L720,577 L721,698 L721,815 L722,917 L722,995 L723,1041 L724,1051 L724,1023 L725,960 L725,866 L726,749 L726,621 L727,491 L728,373 L728,276 L729,209 L729,179 L730,189 L730,238 L731,322 L732,434 L732,563 L733,699 L733,829 L734,942 L734,1028 L735,1078 L736,1088 L736,1058 L737,989 L737,888 L738,764 L738,628 L739,491 L740,367 L740,266 L741,197 L741,167 L742,177 L742,227 L743,313 L744,426 L744,556 L745,692 L745,821 L746,933 L746,1017 L747,1066 L748,1076 L748,1046 L749,979 L749,882 L750,764 L750,634 L751,506 L752,389 L752,295 L753,232 L753,204 L754,214 L754,260 L755,338 L756,440 L756,557 L757,678 L757,793 L758,891 L758,964 L759,1007 L760,1014 L760,988 L761,931 L761,848 L762,748 L762,639 L763,532 L764,436 L764,359 L765,308 L765,287 L766,296 L766,333 L767,396 L768,477 L768,568 L769,662 L769,749 L770,823 L770,877 L771,907 L772,911 L772,891 L773,848 L773,788 L774,716 L774,639 L775,566 L776,501 L776,451 L777,418 L777,406 L778,414 L778,440 L779,481 L780,532 L780,589 L781,645 L781,695 L782,736 L782,764 L783,778 L784,778 L784,764 L785,739 L785,707 L786,671 L786,635 L787,602 L788,576 L788,558 L789,549 L790,556 L790,569 L791,585 L792,602 L792,618 L793,630 L793,638 L794,641 L794,640 L795,634 L796,628 L796,621 L797,615 L797,614 L798,617 L798,625 L799,637 L800,653 L800,670 L801,686 L801,699 L802,706 L803,697 L804,679 L804,653 L805,620 L805,584 L806,548 L806,516 L807,491 L808,477 L809,491 L809,519 L810,560 L810,610 L811,666 L812,723 L812,774 L813,815 L813,841 L814,849 L814,837 L815,804 L816,754 L816,689 L817,616 L817,539 L818,467 L818,407 L819,364 L820,344 L820,348 L821,378 L821,432 L822,506 L822,593 L823,687 L824,778 L824,859 L825,922 L825,959 L826,968 L826,947 L827,896 L828,819 L828,723 L829,616 L829,507 L830,407 L830,324 L831,267 L832,241 L832,248 L833,291 L833,364 L834,462 L834,577 L835,698 L836,815 L836,917 L837,995 L837,1041 L838,1051 L838,1023 L839,960 L840,866 L840,749 L841,621 L841,491 L842,373 L843,276 L843,209 L844,179 L844,189 L845,238 L845,322 L846,434 L847,563 L847,699 L848,829 L848,942 L849,1028 L849,1078 L850,1088 L851,1058 L851,989 L852,888 L852,764 L853,628 L853,491 L854,367 L855,266 L855,197 L856,167 L856,177 L857,227 L857,313 L858,426 L859,556 L859,692 L860,821 L860,933 L861,1017 L861,1066 L862,1076 L863,1046 L863,979 L864,882 L864,764 L865,634 L865,506 L866,389 L867,295 L867,232 L868,204 L868,214 L869,260 L869,338 L870,440 L871,557 L871,678 L872,793 L872,891 L873,964 L873,1007 L874,1014 L875,988 L875,931 L876,848 L876,748 L877,639 L877,532 L878,436 L879,359 L879,308 L880,287 L880,296 L881,333 L881,396 L882,477 L883,568 L883,662 L884,749 L884,823 L885,877 L885,907 L886,911 L887,891 L887,848 L888,788 L888,716 L889,639 L889,566 L890,501 L891,451 L891,418 L892,406 L892,414 L893,440 L893,481 L894,532 L895,589 L895,645 L896,695 L896,736 L897,764 L897,778 L898,778 L899,764 L899,739 L900,707 L900,671 L901,635 L901,602 L902,576 L903,558 L903,549 L904,549 L904,556 L905,569 L905,585 L906,602 L907,618 L907,630 L908,638 L908,641 L909,640 L909,634 L910,628 L911,621 L911,615 L912,614 L912,617 L913,625 L913,637 L914,653 L915,670 L915,686 L916,699 L916,706 L917,706 L917,697 L918,679 L919,653 L919,620 L920,584 L920,548 L921,516 L921,491 L922,477 L923,477 L923,491 L924,519 L924,560 L925,610 L925,666 L926,723 L927,774 L927,815 L928,841 L928,849 L929,837 L929,804 L930,754 L931,689 L931,616 L932,539 L932,467 L933,407 L933,364 L934,344 L935,348 L935,378 L936,432 L936,506 L937,593 L937,687 L938,778 L939,859 L939,922 L940,959 L940,968 L941,947 L941,896 L942,819 L943,723 L943,616 L944,507 L944,407 L945,324 L945,267 L946,241 L947,248 L947,291 L948,364 L948,462 L949,577 L949,698 L950,815 L951,917 L951,995 L952,1041 L952,1051 L953,1023 L953,960 L954,866 L955,749 L955,621 L956,491 L956,373 L957,276 L957,209 L958,179 L959,189 L959,238 L960,322 L960,434 L961,563 L961,699 L962,829 L963,942 L963,1028 L964,1078 L964,1088 L965,1058 L965,989 L966,888 L967,764 L967,628 L968,491 L968,367 L969,266 L969,197 L970,167 L971,177 L971,227 L972,313 L972,426 L973,556 L973,692 L974,821 L975,933 L975,1017 L976,1066 L976,1076 L977,1046 L977,979 L978,882 L979,764 L979,634 L980,506 L980,389 L981,295 L982,232 L982,204 L983,214 L983,260 L984,338 L984,440 L985,557 L986,678 L986,793 L987,891 L987,964 L988,1007 L988,1014 L989,988 L990,931 L990,848 L991,748 L991,639 L992,532 L992,436 L993,359 L994,308 L994,287 L995,296 L995,333 L996,396 L996,477 L997,568 L998,662 L998,749 L999,823 L999,877 L1000,907 L1000,911 L1001,891 L1002,848 L1002,788 L1003,716 L1003,639 L1004,566 L1004,501 L1005,451 L1006,418 L1006,406 L1007,414 L1007,440 L1008,481 L1008,532 L1009,589 L1010,645 L1010,695 L1011,736 L1011,764 L1012,778 L1013,764 L1014,739 L1014,707 L1015,671 L1015,635 L1016,602 L1016,576 L1017,558 L1018,549 L1019,556 L1019,569 L1020,585 L1020,602 L1021,618 L1022,630 L1022,638 L1023,641 L1023,640 L1024,634 L1024,628 L1025,621 L1026,615 L1026,614 L1027,617 L1027,625 L1028,637 L1028,653 L1029,670 L1030,686 L1030,699 L1031,706 L1032,697 L1032,679 L1033,653 L1034,620 L1034,584 L1035,548 L1035,516 L1036,491 L1036,477 L1037,477 L1038,491 L1038,519 L1039,560 L1039,610 L1040,666 L1040,723 L1041,774 L1042,815 L1042,841 L1043,849 L1043,837 L1044,804 L1044,754 L1045,689 L1046,616 L1046,539 L1047,467 L1047,407 L1048,364 L1048,344 L1049,348 L1050,378 L1050,432 L1051,506 L1051,593 L1052,687 L1052,778 L1053,859 L1054,922 L1054,959 L1055,968 L1055,947 L1056,896 L1056,819 L1057,723 L1058,616 L1058,507 L1059,407 L1059,324 L1060,267 L1060,241 L1061,248 L1062,291 L1062,364 L1063,462 L1063,577 L1064,698 L1064,815 L1065,917 L1066,995 L1066,1041 L1067,1051 L1067,1023 L1068,960 L1068,866 L1069,749 L1070,621 L1070,491 L1071,373 L1071,276 L1072,209 L1072,179 L1073,189 L1074,238 L1074,322 L1075,434 L1075,563 L1076,699 L1076,829 L1077,942 L1078,1028 L1078,1078 L1079,1088 L1079,1058 L1080,989 L1080,888 L1081,764 L1082,628 L1082,491 L1083,367 L1083,266 L1084,197 L1084,167 L1085,177 L1086,227 L1086,313 L1087,426 L1087,556 L1088,692 L1088,821 L1089,933 L1090,1017 L1090,1066 L1091,1076 L1091,1046 L1092,979 L1092,882 L1093,764 L1094,634 L1094,506 L1095,389 L1095,295 L1096,232 L1096,204 L1097,214 L1098,260 L1098,338 L1099,440 L1099,557 L1100,678 L1100,793 L1101,891 L1102,964 L1102,1007 L1103,1014 L1103,988 L1104,931 L1104,848 L1105,748 L1106,639 L1106,532 L1107,436 L1107,359 L1108,308 L1108,287 L1109,296 L1110,333 L1110,396 L1111,477 L1111,568 L1112,662 L1112,749 L1113,823 L1114,877 L1114,907 L1115,911 L1115,891 L1116,848 L1116,788 L1117,716 L1118,639 L1118,566 L1119,501 L1119,451 L1120,418 L1120,406 L1121,414 L1122,440 L1122,481 L1123,532 L1123,589 L1124,645 L1124,695 L1125,736 L1126,764 L1126,778 L1127,778 L1127,764 L1128,739 L1129,707 L1129,671 L1130,635 L1130,602 L1131,576 L1131,558 L1132,549 L1133,549 L1133,556 L1134,569 L1134,585 L1135,602 L1135,618 L1136,630 L1137,638 L1137,641 L1138,640 L1138,634 L1139,628 L1139,621 L1140,615 L1141,614 L1141,617 L1142,625 L1142,637 L1143,653 L1143,670 L1144,686 L1145,699 L1145,706 L1146,706 L1146,697 L1147,679 L1147,653 L1148,620 L1149,584 L1149,548 L1150,516 L1150,491 L1151,477 L1152,491 L1153,519 L1153,560 L1154,610 L1154,666 L1155,723 L1155,774 L1156,815 L1157,841 L1157,849 L1158,837 L1158,804 L1159,754 L1159,689 L1160,616 L1161,539 L1161,467 L1162,407 L1162,364 L1163,344 L1163,348 L1164,378 L1165,432 L1165,506 L1166,593 L1166,687 L1167,778 L1167,859 L1168,922 L1169,959 L1169,968 L1170,947 L1170,896 L1171,819 L1171,723 L1172,616 L1173,507 L1173,407 L1174,324 L1174,267 L1175,241 L1175,248 L1176,291 L1177,364 L1177,462 L1178,577 L1178,698 L1179,815 L1179,917 L1180,995 L1181,1041 L1181,1051 L1182,1023 L1182,960 L1183,866 L1183,749 L1184,621 L1185,491 L1185,373 L1186,276 L1186,209 L1187,179 L1187,189 L1188,238 L1189,322 L1189,434 L1190,563 L1190,699 L1191,829 L1191,942 L1192,1028 L1193,1078 L1193,1088 L1194,1058 L1194,989 L1195,888 L1195,764 L1196,628" fill="none" stroke="#00ff00" stroke-width="2" stroke-linejoin="miter" shape-rendering="crispEdges"/>
<rect x="51" y="163" width="1146" height="2" fill="#c0c0c0"/>
<rect x="51" y="1090" width="1146" height="2" fill="#c0c0c0"/>
<rect x="51" y="163" width="2" height="929" fill="#c0c0c0"/>
<rect x="1195" y="163" width="2" height="929" fill="#c0c0c0"/>
<rect x="44" y="163" width="8" height="2" fill="#c0c0c0"/>
<text transform="translate(44,169) scale(0.95,1)" x="0" y="0" font-size="13.7" fill="#c0c0c0" font-weight="bold" text-anchor="end">2.0V</text>
<rect x="44" y="256" width="8" height="2" fill="#c0c0c0"/>
<text transform="translate(44,262) scale(0.95,1)" x="0" y="0" font-size="13.7" fill="#c0c0c0" font-weight="bold" text-anchor="end">1.6V</text>
<rect x="44" y="348" width="8" height="2" fill="#c0c0c0"/>
<text transform="translate(44,354) scale(0.95,1)" x="0" y="0" font-size="13.7" fill="#c0c0c0" font-weight="bold" text-anchor="end">1.2V</text>
<rect x="44" y="441" width="8" height="2" fill="#c0c0c0"/>
<text transform="translate(44,447) scale(0.95,1)" x="0" y="0" font-size="13.7" fill="#c0c0c0" font-weight="bold" text-anchor="end">0.8V</text>
<rect x="44" y="534" width="8" height="2" fill="#c0c0c0"/>
<text transform="translate(44,540) scale(0.95,1)" x="0" y="0" font-size="13.7" fill="#c0c0c0" font-weight="bold" text-anchor="end">0.4V</text>
<rect x="44" y="627" width="8" height="2" fill="#c0c0c0"/>
<text transform="translate(44,633) scale(0.95,1)" x="0" y="0" font-size="13.7" fill="#c0c0c0" font-weight="bold" text-anchor="end">0.0V</text>
<rect x="44" y="719" width="8" height="2" fill="#c0c0c0"/>
<text transform="translate(44,725) scale(0.95,1)" x="0" y="0" font-size="13.7" fill="#c0c0c0" font-weight="bold" text-anchor="end">-0.4V</text>
<rect x="44" y="812" width="8" height="2" fill="#c0c0c0"/>
<text transform="translate(44,818) scale(0.95,1)" x="0" y="0" font-size="13.7" fill="#c0c0c0" font-weight="bold" text-anchor="end">-0.8V</text>
<rect x="44" y="905" width="8" height="2" fill="#c0c0c0"/>
<text transform="translate(44,911) scale(0.95,1)" x="0" y="0" font-size="13.7" fill="#c0c0c0" font-weight="bold" text-anchor="end">-1.2V</text>
<rect x="44" y="997" width="8" height="2" fill="#c0c0c0"/>
<text transform="translate(44,1003) scale(0.95,1)" x="0" y="0" font-size="13.7" fill="#c0c0c0" font-weight="bold" text-anchor="end">-1.6V</text>
<rect x="44" y="1090" width="8" height="2" fill="#c0c0c0"/>
<text transform="translate(44,1096) scale(0.95,1)" x="0" y="0" font-size="13.7" fill="#c0c0c0" font-weight="bold" text-anchor="end">-2.0V</text>
<rect x="51" y="1091" width="2" height="7" fill="#c0c0c0"/>
<text transform="translate(52,1112) scale(0.94,1)" x="0" y="0" font-size="13.6" fill="#c0c0c0" font-weight="bold" text-anchor="middle">0.0ms</text>
<rect x="165" y="1091" width="2" height="7" fill="#c0c0c0"/>
<text transform="translate(166,1112) scale(0.94,1)" x="0" y="0" font-size="13.6" fill="#c0c0c0" font-weight="bold" text-anchor="middle">0.1ms</text>
<rect x="280" y="1091" width="2" height="7" fill="#c0c0c0"/>
<text transform="translate(281,1112) scale(0.94,1)" x="0" y="0" font-size="13.6" fill="#c0c0c0" font-weight="bold" text-anchor="middle">0.2ms</text>
<rect x="394" y="1091" width="2" height="7" fill="#c0c0c0"/>
<text transform="translate(395,1112) scale(0.94,1)" x="0" y="0" font-size="13.6" fill="#c0c0c0" font-weight="bold" text-anchor="middle">0.3ms</text>
<rect x="509" y="1091" width="2" height="7" fill="#c0c0c0"/>
<text transform="translate(510,1112) scale(0.94,1)" x="0" y="0" font-size="13.6" fill="#c0c0c0" font-weight="bold" text-anchor="middle">0.4ms</text>
<rect x="623" y="1091" width="2" height="7" fill="#c0c0c0"/>
<text transform="translate(624,1112) scale(0.94,1)" x="0" y="0" font-size="13.6" fill="#c0c0c0" font-weight="bold" text-anchor="middle">0.5ms</text>
<rect x="737" y="1091" width="2" height="7" fill="#c0c0c0"/>
<text transform="translate(738,1112) scale(0.94,1)" x="0" y="0" font-size="13.6" fill="#c0c0c0" font-weight="bold" text-anchor="middle">0.6ms</text>
<rect x="852" y="1091" width="2" height="7" fill="#c0c0c0"/>
<text transform="translate(853,1112) scale(0.94,1)" x="0" y="0" font-size="13.6" fill="#c0c0c0" font-weight="bold" text-anchor="middle">0.7ms</text>
<rect x="966" y="1091" width="2" height="7" fill="#c0c0c0"/>
<text transform="translate(967,1112) scale(0.94,1)" x="0" y="0" font-size="13.6" fill="#c0c0c0" font-weight="bold" text-anchor="middle">0.8ms</text>
<rect x="1081" y="1091" width="2" height="7" fill="#c0c0c0"/>
<text transform="translate(1082,1112) scale(0.94,1)" x="0" y="0" font-size="13.6" fill="#c0c0c0" font-weight="bold" text-anchor="middle">0.9ms</text>
<rect x="1195" y="1091" width="2" height="7" fill="#c0c0c0"/>
<text transform="translate(1196,1112) scale(0.94,1)" x="0" y="0" font-size="13.6" fill="#c0c0c0" font-weight="bold" text-anchor="middle">1.0ms</text>
<text x="624" y="159" font-size="12.5" fill="#00ff00" font-weight="bold" text-anchor="middle">V(n002)</text>
<line x1="1300" y1="669.5" x2="2264" y2="669.5" stroke="#868686" stroke-width="1" stroke-dasharray="3 3"/>
<line x1="1300" y1="707.5" x2="2264" y2="707.5" stroke="#868686" stroke-width="1" stroke-dasharray="3 3"/>
<line x1="1300" y1="746.5" x2="2264" y2="746.5" stroke="#868686" stroke-width="1" stroke-dasharray="3 3"/>
<line x1="1300" y1="784.5" x2="2264" y2="784.5" stroke="#868686" stroke-width="1" stroke-dasharray="3 3"/>
<line x1="1300" y1="822.5" x2="2264" y2="822.5" stroke="#868686" stroke-width="1" stroke-dasharray="3 3"/>
<line x1="1300" y1="860.5" x2="2264" y2="860.5" stroke="#868686" stroke-width="1" stroke-dasharray="3 3"/>
<line x1="1300" y1="898.5" x2="2264" y2="898.5" stroke="#868686" stroke-width="1" stroke-dasharray="3 3"/>
<line x1="1300" y1="936.5" x2="2264" y2="936.5" stroke="#868686" stroke-width="1" stroke-dasharray="3 3"/>
<line x1="1300" y1="974.5" x2="2264" y2="974.5" stroke="#868686" stroke-width="1" stroke-dasharray="3 3"/>
<line x1="1300" y1="1013.5" x2="2264" y2="1013.5" stroke="#868686" stroke-width="1" stroke-dasharray="3 3"/>
<line x1="1300" y1="1051.5" x2="2264" y2="1051.5" stroke="#868686" stroke-width="1" stroke-dasharray="3 3"/>
<line x1="1357.5" y1="631" x2="1357.5" y2="1089" stroke="#868686" stroke-width="1" stroke-dasharray="3 3"/>
<line x1="1390.5" y1="631" x2="1390.5" y2="1089" stroke="#868686" stroke-width="1" stroke-dasharray="3 3"/>
<line x1="1413.5" y1="631" x2="1413.5" y2="1089" stroke="#868686" stroke-width="1" stroke-dasharray="3 3"/>
<line x1="1432.5" y1="631" x2="1432.5" y2="1089" stroke="#868686" stroke-width="1" stroke-dasharray="3 3"/>
<line x1="1447.5" y1="631" x2="1447.5" y2="1089" stroke="#868686" stroke-width="1" stroke-dasharray="3 3"/>
<line x1="1459.5" y1="631" x2="1459.5" y2="1089" stroke="#868686" stroke-width="1" stroke-dasharray="3 3"/>
<line x1="1470.5" y1="631" x2="1470.5" y2="1089" stroke="#868686" stroke-width="1" stroke-dasharray="3 3"/>
<line x1="1480.5" y1="631" x2="1480.5" y2="1089" stroke="#868686" stroke-width="1" stroke-dasharray="3 3"/>
<line x1="1488.5" y1="631" x2="1488.5" y2="1089" stroke="#868686" stroke-width="1" stroke-dasharray="3 3"/>
<line x1="1545.5" y1="631" x2="1545.5" y2="1089" stroke="#868686" stroke-width="1" stroke-dasharray="3 3"/>
<line x1="1578.5" y1="631" x2="1578.5" y2="1089" stroke="#868686" stroke-width="1" stroke-dasharray="3 3"/>
<line x1="1602.5" y1="631" x2="1602.5" y2="1089" stroke="#868686" stroke-width="1" stroke-dasharray="3 3"/>
<line x1="1620.5" y1="631" x2="1620.5" y2="1089" stroke="#868686" stroke-width="1" stroke-dasharray="3 3"/>
<line x1="1635.5" y1="631" x2="1635.5" y2="1089" stroke="#868686" stroke-width="1" stroke-dasharray="3 3"/>
<line x1="1648.5" y1="631" x2="1648.5" y2="1089" stroke="#868686" stroke-width="1" stroke-dasharray="3 3"/>
<line x1="1659.5" y1="631" x2="1659.5" y2="1089" stroke="#868686" stroke-width="1" stroke-dasharray="3 3"/>
<line x1="1668.5" y1="631" x2="1668.5" y2="1089" stroke="#868686" stroke-width="1" stroke-dasharray="3 3"/>
<line x1="1677.5" y1="631" x2="1677.5" y2="1089" stroke="#868686" stroke-width="1" stroke-dasharray="3 3"/>
<line x1="1734.5" y1="631" x2="1734.5" y2="1089" stroke="#868686" stroke-width="1" stroke-dasharray="3 3"/>
<line x1="1767.5" y1="631" x2="1767.5" y2="1089" stroke="#868686" stroke-width="1" stroke-dasharray="3 3"/>
<line x1="1790.5" y1="631" x2="1790.5" y2="1089" stroke="#868686" stroke-width="1" stroke-dasharray="3 3"/>
<line x1="1808.5" y1="631" x2="1808.5" y2="1089" stroke="#868686" stroke-width="1" stroke-dasharray="3 3"/>
<line x1="1823.5" y1="631" x2="1823.5" y2="1089" stroke="#868686" stroke-width="1" stroke-dasharray="3 3"/>
<line x1="1836.5" y1="631" x2="1836.5" y2="1089" stroke="#868686" stroke-width="1" stroke-dasharray="3 3"/>
<line x1="1847.5" y1="631" x2="1847.5" y2="1089" stroke="#868686" stroke-width="1" stroke-dasharray="3 3"/>
<line x1="1857.5" y1="631" x2="1857.5" y2="1089" stroke="#868686" stroke-width="1" stroke-dasharray="3 3"/>
<line x1="1865.5" y1="631" x2="1865.5" y2="1089" stroke="#868686" stroke-width="1" stroke-dasharray="3 3"/>
<line x1="1922.5" y1="631" x2="1922.5" y2="1089" stroke="#868686" stroke-width="1" stroke-dasharray="3 3"/>
<line x1="1955.5" y1="631" x2="1955.5" y2="1089" stroke="#868686" stroke-width="1" stroke-dasharray="3 3"/>
<line x1="1979.5" y1="631" x2="1979.5" y2="1089" stroke="#868686" stroke-width="1" stroke-dasharray="3 3"/>
<line x1="1997.5" y1="631" x2="1997.5" y2="1089" stroke="#868686" stroke-width="1" stroke-dasharray="3 3"/>
<line x1="2012.5" y1="631" x2="2012.5" y2="1089" stroke="#868686" stroke-width="1" stroke-dasharray="3 3"/>
<line x1="2024.5" y1="631" x2="2024.5" y2="1089" stroke="#868686" stroke-width="1" stroke-dasharray="3 3"/>
<line x1="2035.5" y1="631" x2="2035.5" y2="1089" stroke="#868686" stroke-width="1" stroke-dasharray="3 3"/>
<line x1="2045.5" y1="631" x2="2045.5" y2="1089" stroke="#868686" stroke-width="1" stroke-dasharray="3 3"/>
<line x1="2054.5" y1="631" x2="2054.5" y2="1089" stroke="#868686" stroke-width="1" stroke-dasharray="3 3"/>
<line x1="2110.5" y1="631" x2="2110.5" y2="1089" stroke="#868686" stroke-width="1" stroke-dasharray="3 3"/>
<line x1="2143.5" y1="631" x2="2143.5" y2="1089" stroke="#868686" stroke-width="1" stroke-dasharray="3 3"/>
<line x1="2167.5" y1="631" x2="2167.5" y2="1089" stroke="#868686" stroke-width="1" stroke-dasharray="3 3"/>
<line x1="2185.5" y1="631" x2="2185.5" y2="1089" stroke="#868686" stroke-width="1" stroke-dasharray="3 3"/>
<line x1="2200.5" y1="631" x2="2200.5" y2="1089" stroke="#868686" stroke-width="1" stroke-dasharray="3 3"/>
<line x1="2213.5" y1="631" x2="2213.5" y2="1089" stroke="#868686" stroke-width="1" stroke-dasharray="3 3"/>
<line x1="2224.5" y1="631" x2="2224.5" y2="1089" stroke="#868686" stroke-width="1" stroke-dasharray="3 3"/>
<line x1="2233.5" y1="631" x2="2233.5" y2="1089" stroke="#868686" stroke-width="1" stroke-dasharray="3 3"/>
<line x1="2242.5" y1="631" x2="2242.5" y2="1089" stroke="#868686" stroke-width="1" stroke-dasharray="3 3"/>
<path d="M1301,829 L1449,829 L1451,828 L1478,827 L1479,825 L1480,821 L1481,817 L1482,812 L1483,807 L1484,803 L1485,800 L1486,798 L1487,796 L1488,796 L1489,796 L1490,798 L1491,800 L1492,803 L1493,807 L1494,812 L1495,817 L1496,821 L1497,825 L1498,827 L1541,827 L1545,780 L1546,776 L1547,780 L1551,827 L1575,827 L1578,794 L1579,790 L1580,794 L1583,827 L1600,827 L1600,800 L1601,766 L1602,766 L1602,803 L1604,827 L1619,827 L1620,797 L1620,761 L1621,761 L1622,801 L1622,827 L1634,827 L1634,801 L1635,768 L1636,768 L1636,804 L1638,827 L1646,827 L1646,789 L1647,742 L1648,742 L1648,793 L1650,827 L1657,827 L1658,789 L1658,743 L1659,743 L1660,793 L1660,827 L1666,827 L1666,741 L1667,637 L1668,637 L1668,751 L1670,827 L1675,826 L1676,741 L1676,637 L1677,637 L1678,751 L1678,826 L1683,826 L1684,788 L1684,741 L1685,741 L1686,792 L1686,826 L1690,826 L1690,789 L1691,743 L1692,743 L1692,793 L1694,826 L1696,826 L1696,810 L1697,790 L1698,790 L1698,812 L1700,826 L1702,826 L1702,800 L1703,769 L1704,769 L1704,803 L1706,826 L1708,825 L1708,805 L1709,781 L1710,781 L1710,807 L1712,825 L1713,825 L1714,809 L1714,791 L1715,791 L1716,811 L1716,825 L1718,824 L1718,803 L1719,777 L1720,777 L1720,805 L1722,824 L1723,824 L1724,812 L1724,797 L1725,797 L1726,813 L1726,824 L1730,823" fill="none" stroke="#00ff00" stroke-width="2" stroke-linejoin="miter" stroke-miterlimit="2" shape-rendering="crispEdges"/>
<path d="M1726.5 814V824M1727.5 801V824M1728.5 797V824M1729.5 791V824M1730.5 791V824M1731.5 794V824M1732.5 792V824M1733.5 794V824M1734.5 792V824M1735.5 792V824M1736.5 791V824M1737.5 774V824M1738.5 777V824M1739.5 795V823M1740.5 797V823M1741.5 795V823M1742.5 790V823M1743.5 794V823M1744.5 781V823M1745.5 784V823M1746.5 786V823M1747.5 789V823M1748.5 764V823M1749.5 785V823M1750.5 781V823M1751.5 779V823M1752.5 769V823M1753.5 772V823M1754.5 780V823M1755.5 779V823M1756.5 784V823M1757.5 776V823M1758.5 731V823M1759.5 734V823M1760.5 777V823M1761.5 756V823M1762.5 749V823M1763.5 752V823M1764.5 777V823M1765.5 772V824M1766.5 781V824M1767.5 727V824M1768.5 730V825M1769.5 772V824M1770.5 752V824M1771.5 755V823M1772.5 771V822M1773.5 775V821M1774.5 763V821M1775.5 766V820M1776.5 765V819M1777.5 777V818M1778.5 787V818M1779.5 784V818M1780.5 784V818M1781.5 784V818M1782.5 781V818M1783.5 791V818M1784.5 770V818M1785.5 773V818M1786.5 780V818M1787.5 779V818M1788.5 780V818M1789.5 787V818M1790.5 776V818M1791.5 775V818M1792.5 779V818M1793.5 783V818M1794.5 782V818M1795.5 773V818M1796.5 774V818M1797.5 778V818M1798.5 759V818M1799.5 762V818M1800.5 768V818M1801.5 773V818M1802.5 772V818M1803.5 771V818M1804.5 739V818M1805.5 742V818M1806.5 770V818M1807.5 772V817M1808.5 762V817M1809.5 765V819M1810.5 773V824M1811.5 772V831M1812.5 768V828M1813.5 767V825M1814.5 767V822M1815.5 775V820M1816.5 752V818M1817.5 766V817M1818.5 772V815M1819.5 765V814M1820.5 764V813M1821.5 764V813M1822.5 768V812M1823.5 767V812M1824.5 767V812M1825.5 763V812M1826.5 771V812M1827.5 766V812M1828.5 763V813M1829.5 763V813M1830.5 752V814M1831.5 755V815M1832.5 764V816M1833.5 765V818M1834.5 769V820M1835.5 757V823M1836.5 760V826M1837.5 767V829M1838.5 761V861M1839.5 760V831M1840.5 765V853M1841.5 762V823M1842.5 763V820M1843.5 762V817M1844.5 759V815M1845.5 763V813M1846.5 759V812M1847.5 758V811M1848.5 759V811M1849.5 767V811M1850.5 759V811M1851.5 758V811M1852.5 762V812M1853.5 754V812M1854.5 758V814M1855.5 759V815M1856.5 759V818M1857.5 761V821M1858.5 760V824M1859.5 760V828M1860.5 760V931M1861.5 761V923M1862.5 758V831M1863.5 761V828M1864.5 759V825M1865.5 759V822M1866.5 757V820M1867.5 760V818M1868.5 758V817M1869.5 760V816M1870.5 757V816M1871.5 761V815M1872.5 758V815M1873.5 762V815M1874.5 759V815M1875.5 758V816M1876.5 757V816M1877.5 758V817M1878.5 759V818M1879.5 757V820M1880.5 756V822M1881.5 757V824M1882.5 757V827M1883.5 759V830M1884.5 759V834M1885.5 762V881M1886.5 756V873M1887.5 760V827M1888.5 760V823M1889.5 765V820M1890.5 760V818M1891.5 760V817M1892.5 762V817M1893.5 762V817M1894.5 759V817M1895.5 765V818M1896.5 759V826M1897.5 771V823M1898.5 745V828M1899.5 763V839M1900.5 763V856M1901.5 759V847M1902.5 759V837M1903.5 761V826M1904.5 762V837M1905.5 766V824M1906.5 763V838M1907.5 761V838M1908.5 764V835M1909.5 758V848M1910.5 766V849M1911.5 767V833M1912.5 764V828M1913.5 768V826M1914.5 769V823M1915.5 768V832M1916.5 767V830M1917.5 769V827M1918.5 766V837M1919.5 768V832M1920.5 766V838M1921.5 771V842M1922.5 770V838M1923.5 772V840M1924.5 769V836M1925.5 769V834M1926.5 768V831M1927.5 769V832M1928.5 772V829M1929.5 765V837M1930.5 776V829M1931.5 772V833M1932.5 770V833M1933.5 773V835M1934.5 768V837M1935.5 772V844M1936.5 774V849M1937.5 768V844M1938.5 777V842M1939.5 775V834M1940.5 777V833M1941.5 772V832M1942.5 781V838M1943.5 776V837M1944.5 775V847M1945.5 782V857M1946.5 777V846M1947.5 779V842M1948.5 785V848M1949.5 779V839M1950.5 777V840M1951.5 784V837M1952.5 779V834M1953.5 780V837M1954.5 780V836M1955.5 782V845M1956.5 779V843M1957.5 782V849M1958.5 773V901M1959.5 782V893M1960.5 782V842M1961.5 781V838M1962.5 784V840M1963.5 781V836M1964.5 781V838M1965.5 782V841M1966.5 791V841M1967.5 781V845M1968.5 783V866M1969.5 782V868M1970.5 785V850M1971.5 783V851M1972.5 784V872M1973.5 785V859M1974.5 786V854M1975.5 783V868M1976.5 786V856M1977.5 783V856M1978.5 787V872M1979.5 774V857M1980.5 788V876M1981.5 787V888M1982.5 787V859M1983.5 786V883M1984.5 786V863M1985.5 790V880M1986.5 785V871M1987.5 797V864M1988.5 786V863M1989.5 785V867M1990.5 790V871M1991.5 787V865M1992.5 788V865M1993.5 790V885M1994.5 790V874M1995.5 789V883M1996.5 791V868M1997.5 788V870M1998.5 788V894M1999.5 787V882M2000.5 790V870M2001.5 789V893M2002.5 790V874M2003.5 797V891M2004.5 789V879M2005.5 792V904M2006.5 788V894M2007.5 794V887M2008.5 790V876M2009.5 791V879M2010.5 793V907M2011.5 796V890M2012.5 791V888M2013.5 793V904M2014.5 797V876M2015.5 792V892M2016.5 793V912M2017.5 785V895M2018.5 797V927M2019.5 794V878M2020.5 794V900M2021.5 798V883M2022.5 788V889M2023.5 795V882M2024.5 797V902M2025.5 798V881M2026.5 801V887M2027.5 801V897M2028.5 802V916M2029.5 799V887M2030.5 797V883M2031.5 803V920M2032.5 804V912M2033.5 805V890M2034.5 805V886M2035.5 801V887M2036.5 803V912M2037.5 802V897M2038.5 807V887M2039.5 806V887M2040.5 803V924M2041.5 804V902M2042.5 806V906M2043.5 802V904M2044.5 805V890M2045.5 811V927M2046.5 809V909M2047.5 818V891M2048.5 807V891M2049.5 802V935M2050.5 819V904M2051.5 812V895M2052.5 811V910M2053.5 821V904M2054.5 808V898M2055.5 812V894M2056.5 811V895M2057.5 815V903M2058.5 815V899M2059.5 817V909M2060.5 819V925M2061.5 810V912M2062.5 809V915M2063.5 814V935M2064.5 818V898M2065.5 819V899M2066.5 820V912M2067.5 823V932M2068.5 821V918M2069.5 817V950M2070.5 817V932M2071.5 822V905M2072.5 818V916M2073.5 821V945M2074.5 824V904M2075.5 821V905M2076.5 821V905M2077.5 823V931M2078.5 827V911M2079.5 823V904M2080.5 819V923M2081.5 827V931M2082.5 828V909M2083.5 825V906M2084.5 826V914M2085.5 828V960M2086.5 830V910M2087.5 820V919M2088.5 832V939M2089.5 840V908M2090.5 829V912M2091.5 832V916M2092.5 834V914M2093.5 831V910M2094.5 836V951M2095.5 835V912M2096.5 835V916M2097.5 832V922M2098.5 833V951M2099.5 837V931M2100.5 833V913M2101.5 837V915M2102.5 833V936M2103.5 835V956M2104.5 836V940M2105.5 836V925M2106.5 841V915M2107.5 839V933M2108.5 837V917M2109.5 839V925M2110.5 845V955M2111.5 841V928M2112.5 840V924M2113.5 841V918M2114.5 834V923M2115.5 838V920M2116.5 846V925M2117.5 845V953M2118.5 849V925M2119.5 846V921M2120.5 844V925M2121.5 846V921M2122.5 845V922M2123.5 843V928M2124.5 844V924M2125.5 848V965M2126.5 848V932M2127.5 848V973M2128.5 852V964M2129.5 851V925M2130.5 849V927M2131.5 858V925M2132.5 851V927M2133.5 849V956M2134.5 849V941M2135.5 860V954M2136.5 850V975M2137.5 854V944M2138.5 850V947M2139.5 848V934M2140.5 856V941M2141.5 851V931M2142.5 851V934M2143.5 860V949M2144.5 854V954M2145.5 845V985M2146.5 854V937M2147.5 855V960M2148.5 857V938M2149.5 856V941M2150.5 859V936M2151.5 855V982M2152.5 860V947M2153.5 859V1001M2154.5 859V950M2155.5 861V958M2156.5 862V956M2157.5 862V982M2158.5 859V943M2159.5 862V968M2160.5 868V957M2161.5 860V976M2162.5 863V979M2163.5 868V972M2164.5 861V961M2165.5 862V954M2166.5 864V950M2167.5 865V962M2168.5 866V946M2169.5 865V959M2170.5 866V953M2171.5 868V960M2172.5 863V964M2173.5 866V951M2174.5 860V952M2175.5 859V952M2176.5 875V1003M2177.5 866V974M2178.5 871V968M2179.5 863V954M2180.5 870V981M2181.5 869V969M2182.5 870V985M2183.5 873V1012M2184.5 860V963M2185.5 873V969M2186.5 874V967M2187.5 871V967M2188.5 874V976M2189.5 876V999M2190.5 871V1003M2191.5 873V971M2192.5 881V969M2193.5 875V969M2194.5 881V985M2195.5 873V969M2196.5 878V987M2197.5 879V966M2198.5 875V993M2199.5 877V986M2200.5 878V972M2201.5 880V1015M2202.5 878V1007M2203.5 888V979M2204.5 880V971M2205.5 882V1018M2206.5 883V990M2207.5 884V976M2208.5 883V985M2209.5 882V977M2210.5 886V976M2211.5 882V994M2212.5 883V982M2213.5 884V1037M2214.5 885V981M2215.5 894V1030M2216.5 887V981M2217.5 887V1000M2218.5 888V996M2219.5 888V988M2220.5 890V990M2221.5 901V984M2222.5 893V1006M2223.5 896V1057M2224.5 895V1004M2225.5 897V997M2226.5 892V1002M2227.5 897V1000M2228.5 895V1001M2229.5 895V1002M2230.5 897V1000M2231.5 897V995M2232.5 898V996M2233.5 900V1039M2234.5 902V1003M2235.5 901V1011M2236.5 903V1022M2237.5 902V1001M2238.5 904V1027M2239.5 905V1039M2240.5 903V1045M2241.5 907V1009M2242.5 908V1010M2243.5 901V1002M2244.5 909V1002M2245.5 920V1003M2246.5 918V1036M2247.5 915V1015M2248.5 917V1018M2249.5 909V1010M2250.5 903V1024M2251.5 912V1052M2252.5 911V1014M2253.5 913V1010M2254.5 917V1025M2255.5 917V1014M2256.5 914V1048M2257.5 919V1024M2258.5 925V1027M2259.5 924V1015M2260.5 917V1018M2261.5 920V1050M2262.5 920V1032M2263.5 921V1037" stroke="#00ff00" stroke-width="1.6" fill="none"/>
<rect x="1299" y="630" width="966" height="2" fill="#c0c0c0"/>
<rect x="1299" y="1088" width="966" height="2" fill="#c0c0c0"/>
<rect x="1299" y="630" width="2" height="460" fill="#c0c0c0"/>
<rect x="2263" y="630" width="2" height="460" fill="#c0c0c0"/>
<rect x="1292" y="630" width="8" height="2" fill="#c0c0c0"/>
<text transform="translate(1292,636) scale(0.88,1)" x="0" y="0" font-size="13.6" fill="#c0c0c0" font-weight="bold" text-anchor="end">0dB</text>
<rect x="1292" y="668" width="8" height="2" fill="#c0c0c0"/>
<text transform="translate(1292,674) scale(0.88,1)" x="0" y="0" font-size="13.6" fill="#c0c0c0" font-weight="bold" text-anchor="end">-20dB</text>
<rect x="1292" y="706" width="8" height="2" fill="#c0c0c0"/>
<text transform="translate(1292,712) scale(0.88,1)" x="0" y="0" font-size="13.6" fill="#c0c0c0" font-weight="bold" text-anchor="end">-40dB</text>
<rect x="1292" y="745" width="8" height="2" fill="#c0c0c0"/>
<text transform="translate(1292,751) scale(0.88,1)" x="0" y="0" font-size="13.6" fill="#c0c0c0" font-weight="bold" text-anchor="end">-60dB</text>
<rect x="1292" y="783" width="8" height="2" fill="#c0c0c0"/>
<text transform="translate(1292,789) scale(0.88,1)" x="0" y="0" font-size="13.6" fill="#c0c0c0" font-weight="bold" text-anchor="end">-80dB</text>
<rect x="1292" y="821" width="8" height="2" fill="#c0c0c0"/>
<text transform="translate(1292,827) scale(0.88,1)" x="0" y="0" font-size="13.6" fill="#c0c0c0" font-weight="bold" text-anchor="end">-100dB</text>
<rect x="1292" y="859" width="8" height="2" fill="#c0c0c0"/>
<text transform="translate(1292,865) scale(0.88,1)" x="0" y="0" font-size="13.6" fill="#c0c0c0" font-weight="bold" text-anchor="end">-120dB</text>
<rect x="1292" y="897" width="8" height="2" fill="#c0c0c0"/>
<text transform="translate(1292,903) scale(0.88,1)" x="0" y="0" font-size="13.6" fill="#c0c0c0" font-weight="bold" text-anchor="end">-140dB</text>
<rect x="1292" y="935" width="8" height="2" fill="#c0c0c0"/>
<text transform="translate(1292,941) scale(0.88,1)" x="0" y="0" font-size="13.6" fill="#c0c0c0" font-weight="bold" text-anchor="end">-160dB</text>
<rect x="1292" y="973" width="8" height="2" fill="#c0c0c0"/>
<text transform="translate(1292,979) scale(0.88,1)" x="0" y="0" font-size="13.6" fill="#c0c0c0" font-weight="bold" text-anchor="end">-180dB</text>
<rect x="1292" y="1012" width="8" height="2" fill="#c0c0c0"/>
<text transform="translate(1292,1018) scale(0.88,1)" x="0" y="0" font-size="13.6" fill="#c0c0c0" font-weight="bold" text-anchor="end">-200dB</text>
<rect x="1292" y="1050" width="8" height="2" fill="#c0c0c0"/>
<text transform="translate(1292,1056) scale(0.88,1)" x="0" y="0" font-size="13.6" fill="#c0c0c0" font-weight="bold" text-anchor="end">-220dB</text>
<rect x="1292" y="1088" width="8" height="2" fill="#c0c0c0"/>
<text transform="translate(1292,1094) scale(0.88,1)" x="0" y="0" font-size="13.6" fill="#c0c0c0" font-weight="bold" text-anchor="end">-240dB</text>
<rect x="1356" y="1089" width="2" height="4" fill="#c0c0c0"/>
<rect x="1389" y="1089" width="2" height="4" fill="#c0c0c0"/>
<rect x="1412" y="1089" width="2" height="4" fill="#c0c0c0"/>
<rect x="1431" y="1089" width="2" height="4" fill="#c0c0c0"/>
<rect x="1446" y="1089" width="2" height="4" fill="#c0c0c0"/>
<rect x="1458" y="1089" width="2" height="4" fill="#c0c0c0"/>
<rect x="1469" y="1089" width="2" height="4" fill="#c0c0c0"/>
<rect x="1479" y="1089" width="2" height="4" fill="#c0c0c0"/>
<rect x="1487" y="1089" width="2" height="7" fill="#c0c0c0"/>
<rect x="1544" y="1089" width="2" height="4" fill="#c0c0c0"/>
<rect x="1577" y="1089" width="2" height="4" fill="#c0c0c0"/>
<rect x="1601" y="1089" width="2" height="4" fill="#c0c0c0"/>
<rect x="1619" y="1089" width="2" height="4" fill="#c0c0c0"/>
<rect x="1634" y="1089" width="2" height="4" fill="#c0c0c0"/>
<rect x="1647" y="1089" width="2" height="4" fill="#c0c0c0"/>
<rect x="1658" y="1089" width="2" height="4" fill="#c0c0c0"/>
<rect x="1667" y="1089" width="2" height="4" fill="#c0c0c0"/>
<rect x="1676" y="1089" width="2" height="7" fill="#c0c0c0"/>
<rect x="1733" y="1089" width="2" height="4" fill="#c0c0c0"/>
<rect x="1766" y="1089" width="2" height="4" fill="#c0c0c0"/>
<rect x="1789" y="1089" width="2" height="4" fill="#c0c0c0"/>
<rect x="1807" y="1089" width="2" height="4" fill="#c0c0c0"/>
<rect x="1822" y="1089" width="2" height="4" fill="#c0c0c0"/>
<rect x="1835" y="1089" width="2" height="4" fill="#c0c0c0"/>
<rect x="1846" y="1089" width="2" height="4" fill="#c0c0c0"/>
<rect x="1856" y="1089" width="2" height="4" fill="#c0c0c0"/>
<rect x="1864" y="1089" width="2" height="7" fill="#c0c0c0"/>
<rect x="1921" y="1089" width="2" height="4" fill="#c0c0c0"/>
<rect x="1954" y="1089" width="2" height="4" fill="#c0c0c0"/>
<rect x="1978" y="1089" width="2" height="4" fill="#c0c0c0"/>
<rect x="1996" y="1089" width="2" height="4" fill="#c0c0c0"/>
<rect x="2011" y="1089" width="2" height="4" fill="#c0c0c0"/>
<rect x="2023" y="1089" width="2" height="4" fill="#c0c0c0"/>
<rect x="2034" y="1089" width="2" height="4" fill="#c0c0c0"/>
<rect x="2044" y="1089" width="2" height="4" fill="#c0c0c0"/>
<rect x="2053" y="1089" width="2" height="7" fill="#c0c0c0"/>
<rect x="2109" y="1089" width="2" height="4" fill="#c0c0c0"/>
<rect x="2142" y="1089" width="2" height="4" fill="#c0c0c0"/>
<rect x="2166" y="1089" width="2" height="4" fill="#c0c0c0"/>
<rect x="2184" y="1089" width="2" height="4" fill="#c0c0c0"/>
<rect x="2199" y="1089" width="2" height="4" fill="#c0c0c0"/>
<rect x="2212" y="1089" width="2" height="4" fill="#c0c0c0"/>
<rect x="2223" y="1089" width="2" height="4" fill="#c0c0c0"/>
<rect x="2232" y="1089" width="2" height="4" fill="#c0c0c0"/>
<rect x="2241" y="1089" width="2" height="7" fill="#c0c0c0"/>
<rect x="1299" y="1089" width="2" height="7" fill="#c0c0c0"/>
<text transform="translate(1300,1110) scale(0.9,1)" x="0" y="0" font-size="13.6" fill="#c0c0c0" font-weight="bold" text-anchor="middle">1KHz</text>
<text transform="translate(1488,1110) scale(0.9,1)" x="0" y="0" font-size="13.6" fill="#c0c0c0" font-weight="bold" text-anchor="middle">10KHz</text>
<text transform="translate(1677,1110) scale(0.9,1)" x="0" y="0" font-size="13.6" fill="#c0c0c0" font-weight="bold" text-anchor="middle">100KHz</text>
<text transform="translate(1865,1110) scale(0.9,1)" x="0" y="0" font-size="13.6" fill="#c0c0c0" font-weight="bold" text-anchor="middle">1MHz</text>
<text transform="translate(2054,1110) scale(0.9,1)" x="0" y="0" font-size="13.6" fill="#c0c0c0" font-weight="bold" text-anchor="middle">10MHz</text>
<text transform="translate(2242,1110) scale(0.9,1)" x="0" y="0" font-size="13.6" fill="#c0c0c0" font-weight="bold" text-anchor="middle">100MHz</text>
<text x="1782" y="626" font-size="12.5" fill="#00ff00" font-weight="bold" text-anchor="middle">V(n002)</text>
<path d="M1243 155h1v1h-1zM1261 155h1v1h-1zM1280 155h1v1h-1zM1299 155h1v1h-1zM1317 155h1v1h-1zM1336 155h1v1h-1zM1355 155h1v1h-1zM1373 155h1v1h-1zM1392 155h1v1h-1zM1411 155h1v1h-1zM1429 155h1v1h-1zM1448 155h1v1h-1zM1466 155h1v1h-1zM1485 155h1v1h-1zM1504 155h1v1h-1zM1522 155h1v1h-1zM1541 155h1v1h-1zM1560 155h1v1h-1zM1578 155h1v1h-1zM1597 155h1v1h-1zM1616 155h1v1h-1zM1634 155h1v1h-1zM1653 155h1v1h-1zM1672 155h1v1h-1zM1690 155h1v1h-1zM1709 155h1v1h-1zM1727 155h1v1h-1zM1746 155h1v1h-1zM1765 155h1v1h-1zM1783 155h1v1h-1zM1802 155h1v1h-1zM1821 155h1v1h-1zM1839 155h1v1h-1zM1858 155h1v1h-1zM1877 155h1v1h-1zM1895 155h1v1h-1zM1914 155h1v1h-1zM1932 155h1v1h-1zM1951 155h1v1h-1zM1970 155h1v1h-1zM1988 155h1v1h-1zM2007 155h1v1h-1zM2026 155h1v1h-1zM2044 155h1v1h-1zM2063 155h1v1h-1zM2082 155h1v1h-1zM2100 155h1v1h-1zM2119 155h1v1h-1zM2138 155h1v1h-1zM2156 155h1v1h-1zM2175 155h1v1h-1zM2193 155h1v1h-1zM2212 155h1v1h-1zM2231 155h1v1h-1zM2249 155h1v1h-1zM2268 155h1v1h-1zM2287 155h1v1h-1zM2305 155h1v1h-1zM2324 155h1v1h-1zM2343 155h1v1h-1zM2361 155h1v1h-1zM2380 155h1v1h-1zM2398 155h1v1h-1zM2417 155h1v1h-1zM1243 174h1v1h-1zM1261 174h1v1h-1zM1280 174h1v1h-1zM1299 174h1v1h-1zM1317 174h1v1h-1zM1336 174h1v1h-1zM1355 174h1v1h-1zM1373 174h1v1h-1zM1392 174h1v1h-1zM1411 174h1v1h-1zM1429 174h1v1h-1zM1448 174h1v1h-1zM1466 174h1v1h-1zM1485 174h1v1h-1zM1504 174h1v1h-1zM1522 174h1v1h-1zM1541 174h1v1h-1zM1560 174h1v1h-1zM1578 174h1v1h-1zM1597 174h1v1h-1zM1616 174h1v1h-1zM1634 174h1v1h-1zM1653 174h1v1h-1zM1672 174h1v1h-1zM1690 174h1v1h-1zM1709 174h1v1h-1zM1727 174h1v1h-1zM1746 174h1v1h-1zM1765 174h1v1h-1zM1783 174h1v1h-1zM1802 174h1v1h-1zM1821 174h1v1h-1zM1839 174h1v1h-1zM1858 174h1v1h-1zM1877 174h1v1h-1zM1895 174h1v1h-1zM1914 174h1v1h-1zM1932 174h1v1h-1zM1951 174h1v1h-1zM1970 174h1v1h-1zM1988 174h1v1h-1zM2007 174h1v1h-1zM2026 174h1v1h-1zM2044 174h1v1h-1zM2063 174h1v1h-1zM2082 174h1v1h-1zM2100 174h1v1h-1zM2119 174h1v1h-1zM2138 174h1v1h-1zM2156 174h1v1h-1zM2175 174h1v1h-1zM2193 174h1v1h-1zM2212 174h1v1h-1zM2231 174h1v1h-1zM2249 174h1v1h-1zM2268 174h1v1h-1zM2287 174h1v1h-1zM2305 174h1v1h-1zM2324 174h1v1h-1zM2343 174h1v1h-1zM2361 174h1v1h-1zM2380 174h1v1h-1zM2398 174h1v1h-1zM2417 174h1v1h-1zM1243 192h1v1h-1zM1261 192h1v1h-1zM1280 192h1v1h-1zM1299 192h1v1h-1zM1317 192h1v1h-1zM1336 192h1v1h-1zM1355 192h1v1h-1zM1373 192h1v1h-1zM1392 192h1v1h-1zM1411 192h1v1h-1zM1429 192h1v1h-1zM1448 192h1v1h-1zM1466 192h1v1h-1zM1485 192h1v1h-1zM1504 192h1v1h-1zM1522 192h1v1h-1zM1541 192h1v1h-1zM1560 192h1v1h-1zM1578 192h1v1h-1zM1597 192h1v1h-1zM1616 192h1v1h-1zM1634 192h1v1h-1zM1653 192h1v1h-1zM1672 192h1v1h-1zM1690 192h1v1h-1zM1709 192h1v1h-1zM1727 192h1v1h-1zM1746 192h1v1h-1zM1765 192h1v1h-1zM1783 192h1v1h-1zM1802 192h1v1h-1zM1821 192h1v1h-1zM1839 192h1v1h-1zM1858 192h1v1h-1zM1877 192h1v1h-1zM1895 192h1v1h-1zM1914 192h1v1h-1zM1932 192h1v1h-1zM1951 192h1v1h-1zM1970 192h1v1h-1zM1988 192h1v1h-1zM2007 192h1v1h-1zM2026 192h1v1h-1zM2044 192h1v1h-1zM2063 192h1v1h-1zM2082 192h1v1h-1zM2100 192h1v1h-1zM2119 192h1v1h-1zM2138 192h1v1h-1zM2156 192h1v1h-1zM2175 192h1v1h-1zM2193 192h1v1h-1zM2212 192h1v1h-1zM2231 192h1v1h-1zM2249 192h1v1h-1zM2268 192h1v1h-1zM2287 192h1v1h-1zM2305 192h1v1h-1zM2324 192h1v1h-1zM2343 192h1v1h-1zM2361 192h1v1h-1zM2380 192h1v1h-1zM2398 192h1v1h-1zM2417 192h1v1h-1zM1243 211h1v1h-1zM1261 211h1v1h-1zM1280 211h1v1h-1zM1299 211h1v1h-1zM1317 211h1v1h-1zM1336 211h1v1h-1zM1355 211h1v1h-1zM1373 211h1v1h-1zM1392 211h1v1h-1zM1411 211h1v1h-1zM1429 211h1v1h-1zM1448 211h1v1h-1zM1466 211h1v1h-1zM1485 211h1v1h-1zM1504 211h1v1h-1zM1522 211h1v1h-1zM1541 211h1v1h-1zM1560 211h1v1h-1zM1578 211h1v1h-1zM1597 211h1v1h-1zM1616 211h1v1h-1zM1634 211h1v1h-1zM1653 211h1v1h-1zM1672 211h1v1h-1zM1690 211h1v1h-1zM1709 211h1v1h-1zM1727 211h1v1h-1zM1746 211h1v1h-1zM1765 211h1v1h-1zM1783 211h1v1h-1zM1802 211h1v1h-1zM1821 211h1v1h-1zM1839 211h1v1h-1zM1858 211h1v1h-1zM1877 211h1v1h-1zM1895 211h1v1h-1zM1914 211h1v1h-1zM1932 211h1v1h-1zM1951 211h1v1h-1zM1970 211h1v1h-1zM1988 211h1v1h-1zM2007 211h1v1h-1zM2026 211h1v1h-1zM2044 211h1v1h-1zM2063 211h1v1h-1zM2082 211h1v1h-1zM2100 211h1v1h-1zM2119 211h1v1h-1zM2138 211h1v1h-1zM2156 211h1v1h-1zM2175 211h1v1h-1zM2193 211h1v1h-1zM2212 211h1v1h-1zM2231 211h1v1h-1zM2249 211h1v1h-1zM2268 211h1v1h-1zM2287 211h1v1h-1zM2305 211h1v1h-1zM2324 211h1v1h-1zM2343 211h1v1h-1zM2361 211h1v1h-1zM2380 211h1v1h-1zM2398 211h1v1h-1zM2417 211h1v1h-1zM1243 230h1v1h-1zM1261 230h1v1h-1zM1280 230h1v1h-1zM1299 230h1v1h-1zM1317 230h1v1h-1zM1336 230h1v1h-1zM1355 230h1v1h-1zM1373 230h1v1h-1zM1392 230h1v1h-1zM1411 230h1v1h-1zM1429 230h1v1h-1zM1448 230h1v1h-1zM1466 230h1v1h-1zM1485 230h1v1h-1zM1504 230h1v1h-1zM1522 230h1v1h-1zM1541 230h1v1h-1zM1560 230h1v1h-1zM1578 230h1v1h-1zM1597 230h1v1h-1zM1616 230h1v1h-1zM1634 230h1v1h-1zM1653 230h1v1h-1zM1672 230h1v1h-1zM1690 230h1v1h-1zM1709 230h1v1h-1zM1727 230h1v1h-1zM1746 230h1v1h-1zM1765 230h1v1h-1zM1783 230h1v1h-1zM1802 230h1v1h-1zM1821 230h1v1h-1zM1839 230h1v1h-1zM1858 230h1v1h-1zM1877 230h1v1h-1zM1895 230h1v1h-1zM1914 230h1v1h-1zM1932 230h1v1h-1zM1951 230h1v1h-1zM1970 230h1v1h-1zM1988 230h1v1h-1zM2007 230h1v1h-1zM2026 230h1v1h-1zM2044 230h1v1h-1zM2063 230h1v1h-1zM2082 230h1v1h-1zM2100 230h1v1h-1zM2119 230h1v1h-1zM2138 230h1v1h-1zM2156 230h1v1h-1zM2175 230h1v1h-1zM2193 230h1v1h-1zM2212 230h1v1h-1zM2231 230h1v1h-1zM2249 230h1v1h-1zM2268 230h1v1h-1zM2287 230h1v1h-1zM2305 230h1v1h-1zM2324 230h1v1h-1zM2343 230h1v1h-1zM2361 230h1v1h-1zM2380 230h1v1h-1zM2398 230h1v1h-1zM2417 230h1v1h-1zM1243 248h1v1h-1zM1261 248h1v1h-1zM1280 248h1v1h-1zM1299 248h1v1h-1zM1317 248h1v1h-1zM1336 248h1v1h-1zM1355 248h1v1h-1zM1373 248h1v1h-1zM1392 248h1v1h-1zM1411 248h1v1h-1zM1429 248h1v1h-1zM1448 248h1v1h-1zM1466 248h1v1h-1zM1485 248h1v1h-1zM1504 248h1v1h-1zM1522 248h1v1h-1zM1541 248h1v1h-1zM1560 248h1v1h-1zM1578 248h1v1h-1zM1597 248h1v1h-1zM1616 248h1v1h-1zM1634 248h1v1h-1zM1653 248h1v1h-1zM1672 248h1v1h-1zM1690 248h1v1h-1zM1709 248h1v1h-1zM1727 248h1v1h-1zM1746 248h1v1h-1zM1765 248h1v1h-1zM1783 248h1v1h-1zM1802 248h1v1h-1zM1821 248h1v1h-1zM1839 248h1v1h-1zM1858 248h1v1h-1zM1877 248h1v1h-1zM1895 248h1v1h-1zM1914 248h1v1h-1zM1932 248h1v1h-1zM1951 248h1v1h-1zM1970 248h1v1h-1zM1988 248h1v1h-1zM2007 248h1v1h-1zM2026 248h1v1h-1zM2044 248h1v1h-1zM2063 248h1v1h-1zM2082 248h1v1h-1zM2100 248h1v1h-1zM2119 248h1v1h-1zM2138 248h1v1h-1zM2156 248h1v1h-1zM2175 248h1v1h-1zM2193 248h1v1h-1zM2212 248h1v1h-1zM2231 248h1v1h-1zM2249 248h1v1h-1zM2268 248h1v1h-1zM2287 248h1v1h-1zM2305 248h1v1h-1zM2324 248h1v1h-1zM2343 248h1v1h-1zM2361 248h1v1h-1zM2380 248h1v1h-1zM2398 248h1v1h-1zM2417 248h1v1h-1zM1243 267h1v1h-1zM1261 267h1v1h-1zM1280 267h1v1h-1zM1299 267h1v1h-1zM1317 267h1v1h-1zM1336 267h1v1h-1zM1355 267h1v1h-1zM1373 267h1v1h-1zM1392 267h1v1h-1zM1411 267h1v1h-1zM1429 267h1v1h-1zM1448 267h1v1h-1zM1466 267h1v1h-1zM1485 267h1v1h-1zM1504 267h1v1h-1zM1522 267h1v1h-1zM1541 267h1v1h-1zM1560 267h1v1h-1zM1578 267h1v1h-1zM1597 267h1v1h-1zM1616 267h1v1h-1zM1634 267h1v1h-1zM1653 267h1v1h-1zM1672 267h1v1h-1zM1690 267h1v1h-1zM1709 267h1v1h-1zM1727 267h1v1h-1zM1746 267h1v1h-1zM1765 267h1v1h-1zM1783 267h1v1h-1zM1802 267h1v1h-1zM1821 267h1v1h-1zM1839 267h1v1h-1zM1858 267h1v1h-1zM1877 267h1v1h-1zM1895 267h1v1h-1zM1914 267h1v1h-1zM1932 267h1v1h-1zM1951 267h1v1h-1zM1970 267h1v1h-1zM1988 267h1v1h-1zM2007 267h1v1h-1zM2026 267h1v1h-1zM2044 267h1v1h-1zM2063 267h1v1h-1zM2082 267h1v1h-1zM2100 267h1v1h-1zM2119 267h1v1h-1zM2138 267h1v1h-1zM2156 267h1v1h-1zM2175 267h1v1h-1zM2193 267h1v1h-1zM2212 267h1v1h-1zM2231 267h1v1h-1zM2249 267h1v1h-1zM2268 267h1v1h-1zM2287 267h1v1h-1zM2305 267h1v1h-1zM2324 267h1v1h-1zM2343 267h1v1h-1zM2361 267h1v1h-1zM2380 267h1v1h-1zM2398 267h1v1h-1zM2417 267h1v1h-1zM1243 286h1v1h-1zM1261 286h1v1h-1zM1280 286h1v1h-1zM1299 286h1v1h-1zM1317 286h1v1h-1zM1336 286h1v1h-1zM1355 286h1v1h-1zM1373 286h1v1h-1zM1392 286h1v1h-1zM1411 286h1v1h-1zM1429 286h1v1h-1zM1448 286h1v1h-1zM1466 286h1v1h-1zM1485 286h1v1h-1zM1504 286h1v1h-1zM1522 286h1v1h-1zM1541 286h1v1h-1zM1560 286h1v1h-1zM1578 286h1v1h-1zM1597 286h1v1h-1zM1616 286h1v1h-1zM1634 286h1v1h-1zM1653 286h1v1h-1zM1672 286h1v1h-1zM1690 286h1v1h-1zM1709 286h1v1h-1zM1727 286h1v1h-1zM1746 286h1v1h-1zM1765 286h1v1h-1zM1783 286h1v1h-1zM1802 286h1v1h-1zM1821 286h1v1h-1zM1839 286h1v1h-1zM1858 286h1v1h-1zM1877 286h1v1h-1zM1895 286h1v1h-1zM1914 286h1v1h-1zM1932 286h1v1h-1zM1951 286h1v1h-1zM1970 286h1v1h-1zM1988 286h1v1h-1zM2007 286h1v1h-1zM2026 286h1v1h-1zM2044 286h1v1h-1zM2063 286h1v1h-1zM2082 286h1v1h-1zM2100 286h1v1h-1zM2119 286h1v1h-1zM2138 286h1v1h-1zM2156 286h1v1h-1zM2175 286h1v1h-1zM2193 286h1v1h-1zM2212 286h1v1h-1zM2231 286h1v1h-1zM2249 286h1v1h-1zM2268 286h1v1h-1zM2287 286h1v1h-1zM2305 286h1v1h-1zM2324 286h1v1h-1zM2343 286h1v1h-1zM2361 286h1v1h-1zM2380 286h1v1h-1zM2398 286h1v1h-1zM2417 286h1v1h-1zM1243 304h1v1h-1zM1261 304h1v1h-1zM1280 304h1v1h-1zM1299 304h1v1h-1zM1317 304h1v1h-1zM1336 304h1v1h-1zM1355 304h1v1h-1zM1373 304h1v1h-1zM1392 304h1v1h-1zM1411 304h1v1h-1zM1429 304h1v1h-1zM1448 304h1v1h-1zM1466 304h1v1h-1zM1485 304h1v1h-1zM1504 304h1v1h-1zM1522 304h1v1h-1zM1541 304h1v1h-1zM1560 304h1v1h-1zM1578 304h1v1h-1zM1597 304h1v1h-1zM1616 304h1v1h-1zM1634 304h1v1h-1zM1653 304h1v1h-1zM1672 304h1v1h-1zM1690 304h1v1h-1zM1709 304h1v1h-1zM1727 304h1v1h-1zM1746 304h1v1h-1zM1765 304h1v1h-1zM1783 304h1v1h-1zM1802 304h1v1h-1zM1821 304h1v1h-1zM1839 304h1v1h-1zM1858 304h1v1h-1zM1877 304h1v1h-1zM1895 304h1v1h-1zM1914 304h1v1h-1zM1932 304h1v1h-1zM1951 304h1v1h-1zM1970 304h1v1h-1zM1988 304h1v1h-1zM2007 304h1v1h-1zM2026 304h1v1h-1zM2044 304h1v1h-1zM2063 304h1v1h-1zM2082 304h1v1h-1zM2100 304h1v1h-1zM2119 304h1v1h-1zM2138 304h1v1h-1zM2156 304h1v1h-1zM2175 304h1v1h-1zM2193 304h1v1h-1zM2212 304h1v1h-1zM2231 304h1v1h-1zM2249 304h1v1h-1zM2268 304h1v1h-1zM2287 304h1v1h-1zM2305 304h1v1h-1zM2324 304h1v1h-1zM2343 304h1v1h-1zM2361 304h1v1h-1zM2380 304h1v1h-1zM2398 304h1v1h-1zM2417 304h1v1h-1zM1243 323h1v1h-1zM1261 323h1v1h-1zM1280 323h1v1h-1zM1299 323h1v1h-1zM1317 323h1v1h-1zM1336 323h1v1h-1zM1355 323h1v1h-1zM1373 323h1v1h-1zM1392 323h1v1h-1zM1411 323h1v1h-1zM1429 323h1v1h-1zM1448 323h1v1h-1zM1466 323h1v1h-1zM1485 323h1v1h-1zM1504 323h1v1h-1zM1522 323h1v1h-1zM1541 323h1v1h-1zM1560 323h1v1h-1zM1578 323h1v1h-1zM1597 323h1v1h-1zM1616 323h1v1h-1zM1634 323h1v1h-1zM1653 323h1v1h-1zM1672 323h1v1h-1zM1690 323h1v1h-1zM1709 323h1v1h-1zM1727 323h1v1h-1zM1746 323h1v1h-1zM1765 323h1v1h-1zM1783 323h1v1h-1zM1802 323h1v1h-1zM1821 323h1v1h-1zM1839 323h1v1h-1zM1858 323h1v1h-1zM1877 323h1v1h-1zM1895 323h1v1h-1zM1914 323h1v1h-1zM1932 323h1v1h-1zM1951 323h1v1h-1zM1970 323h1v1h-1zM1988 323h1v1h-1zM2007 323h1v1h-1zM2026 323h1v1h-1zM2044 323h1v1h-1zM2063 323h1v1h-1zM2082 323h1v1h-1zM2100 323h1v1h-1zM2119 323h1v1h-1zM2138 323h1v1h-1zM2156 323h1v1h-1zM2175 323h1v1h-1zM2193 323h1v1h-1zM2212 323h1v1h-1zM2231 323h1v1h-1zM2249 323h1v1h-1zM2268 323h1v1h-1zM2287 323h1v1h-1zM2305 323h1v1h-1zM2324 323h1v1h-1zM2343 323h1v1h-1zM2361 323h1v1h-1zM2380 323h1v1h-1zM2398 323h1v1h-1zM2417 323h1v1h-1zM1243 342h1v1h-1zM1261 342h1v1h-1zM1280 342h1v1h-1zM1299 342h1v1h-1zM1317 342h1v1h-1zM1336 342h1v1h-1zM1355 342h1v1h-1zM1373 342h1v1h-1zM1392 342h1v1h-1zM1411 342h1v1h-1zM1429 342h1v1h-1zM1448 342h1v1h-1zM1466 342h1v1h-1zM1485 342h1v1h-1zM1504 342h1v1h-1zM1522 342h1v1h-1zM1541 342h1v1h-1zM1560 342h1v1h-1zM1578 342h1v1h-1zM1597 342h1v1h-1zM1616 342h1v1h-1zM1634 342h1v1h-1zM1653 342h1v1h-1zM1672 342h1v1h-1zM1690 342h1v1h-1zM1709 342h1v1h-1zM1727 342h1v1h-1zM1746 342h1v1h-1zM1765 342h1v1h-1zM1783 342h1v1h-1zM1802 342h1v1h-1zM1821 342h1v1h-1zM1839 342h1v1h-1zM1858 342h1v1h-1zM1877 342h1v1h-1zM1895 342h1v1h-1zM1914 342h1v1h-1zM1932 342h1v1h-1zM1951 342h1v1h-1zM1970 342h1v1h-1zM1988 342h1v1h-1zM2007 342h1v1h-1zM2026 342h1v1h-1zM2044 342h1v1h-1zM2063 342h1v1h-1zM2082 342h1v1h-1zM2100 342h1v1h-1zM2119 342h1v1h-1zM2138 342h1v1h-1zM2156 342h1v1h-1zM2175 342h1v1h-1zM2193 342h1v1h-1zM2212 342h1v1h-1zM2231 342h1v1h-1zM2249 342h1v1h-1zM2268 342h1v1h-1zM2287 342h1v1h-1zM2305 342h1v1h-1zM2324 342h1v1h-1zM2343 342h1v1h-1zM2361 342h1v1h-1zM2380 342h1v1h-1zM2398 342h1v1h-1zM2417 342h1v1h-1zM1243 360h1v1h-1zM1261 360h1v1h-1zM1280 360h1v1h-1zM1299 360h1v1h-1zM1317 360h1v1h-1zM1336 360h1v1h-1zM1355 360h1v1h-1zM1373 360h1v1h-1zM1392 360h1v1h-1zM1411 360h1v1h-1zM1429 360h1v1h-1zM1448 360h1v1h-1zM1466 360h1v1h-1zM1485 360h1v1h-1zM1504 360h1v1h-1zM1522 360h1v1h-1zM1541 360h1v1h-1zM1560 360h1v1h-1zM1578 360h1v1h-1zM1597 360h1v1h-1zM1616 360h1v1h-1zM1634 360h1v1h-1zM1653 360h1v1h-1zM1672 360h1v1h-1zM1690 360h1v1h-1zM1709 360h1v1h-1zM1727 360h1v1h-1zM1746 360h1v1h-1zM1765 360h1v1h-1zM1783 360h1v1h-1zM1802 360h1v1h-1zM1821 360h1v1h-1zM1839 360h1v1h-1zM1858 360h1v1h-1zM1877 360h1v1h-1zM1895 360h1v1h-1zM1914 360h1v1h-1zM1932 360h1v1h-1zM1951 360h1v1h-1zM1970 360h1v1h-1zM1988 360h1v1h-1zM2007 360h1v1h-1zM2026 360h1v1h-1zM2044 360h1v1h-1zM2063 360h1v1h-1zM2082 360h1v1h-1zM2100 360h1v1h-1zM2119 360h1v1h-1zM2138 360h1v1h-1zM2156 360h1v1h-1zM2175 360h1v1h-1zM2193 360h1v1h-1zM2212 360h1v1h-1zM2231 360h1v1h-1zM2249 360h1v1h-1zM2268 360h1v1h-1zM2287 360h1v1h-1zM2305 360h1v1h-1zM2324 360h1v1h-1zM2343 360h1v1h-1zM2361 360h1v1h-1zM2380 360h1v1h-1zM2398 360h1v1h-1zM2417 360h1v1h-1zM1243 379h1v1h-1zM1261 379h1v1h-1zM1280 379h1v1h-1zM1299 379h1v1h-1zM1317 379h1v1h-1zM1336 379h1v1h-1zM1355 379h1v1h-1zM1373 379h1v1h-1zM1392 379h1v1h-1zM1411 379h1v1h-1zM1429 379h1v1h-1zM1448 379h1v1h-1zM1466 379h1v1h-1zM1485 379h1v1h-1zM1504 379h1v1h-1zM1522 379h1v1h-1zM1541 379h1v1h-1zM1560 379h1v1h-1zM1578 379h1v1h-1zM1597 379h1v1h-1zM1616 379h1v1h-1zM1634 379h1v1h-1zM1653 379h1v1h-1zM1672 379h1v1h-1zM1690 379h1v1h-1zM1709 379h1v1h-1zM1727 379h1v1h-1zM1746 379h1v1h-1zM1765 379h1v1h-1zM1783 379h1v1h-1zM1802 379h1v1h-1zM1821 379h1v1h-1zM1839 379h1v1h-1zM1858 379h1v1h-1zM1877 379h1v1h-1zM1895 379h1v1h-1zM1914 379h1v1h-1zM1932 379h1v1h-1zM1951 379h1v1h-1zM1970 379h1v1h-1zM1988 379h1v1h-1zM2007 379h1v1h-1zM2026 379h1v1h-1zM2044 379h1v1h-1zM2063 379h1v1h-1zM2082 379h1v1h-1zM2100 379h1v1h-1zM2119 379h1v1h-1zM2138 379h1v1h-1zM2156 379h1v1h-1zM2175 379h1v1h-1zM2193 379h1v1h-1zM2212 379h1v1h-1zM2231 379h1v1h-1zM2249 379h1v1h-1zM2268 379h1v1h-1zM2287 379h1v1h-1zM2305 379h1v1h-1zM2324 379h1v1h-1zM2343 379h1v1h-1zM2361 379h1v1h-1zM2380 379h1v1h-1zM2398 379h1v1h-1zM2417 379h1v1h-1zM1243 397h1v1h-1zM1261 397h1v1h-1zM1280 397h1v1h-1zM1299 397h1v1h-1zM1317 397h1v1h-1zM1336 397h1v1h-1zM1355 397h1v1h-1zM1373 397h1v1h-1zM1392 397h1v1h-1zM1411 397h1v1h-1zM1429 397h1v1h-1zM1448 397h1v1h-1zM1466 397h1v1h-1zM1485 397h1v1h-1zM1504 397h1v1h-1zM1522 397h1v1h-1zM1541 397h1v1h-1zM1560 397h1v1h-1zM1578 397h1v1h-1zM1597 397h1v1h-1zM1616 397h1v1h-1zM1634 397h1v1h-1zM1653 397h1v1h-1zM1672 397h1v1h-1zM1690 397h1v1h-1zM1709 397h1v1h-1zM1727 397h1v1h-1zM1746 397h1v1h-1zM1765 397h1v1h-1zM1783 397h1v1h-1zM1802 397h1v1h-1zM1821 397h1v1h-1zM1839 397h1v1h-1zM1858 397h1v1h-1zM1877 397h1v1h-1zM1895 397h1v1h-1zM1914 397h1v1h-1zM1932 397h1v1h-1zM1951 397h1v1h-1zM1970 397h1v1h-1zM1988 397h1v1h-1zM2007 397h1v1h-1zM2026 397h1v1h-1zM2044 397h1v1h-1zM2063 397h1v1h-1zM2082 397h1v1h-1zM2100 397h1v1h-1zM2119 397h1v1h-1zM2138 397h1v1h-1zM2156 397h1v1h-1zM2175 397h1v1h-1zM2193 397h1v1h-1zM2212 397h1v1h-1zM2231 397h1v1h-1zM2249 397h1v1h-1zM2268 397h1v1h-1zM2287 397h1v1h-1zM2305 397h1v1h-1zM2324 397h1v1h-1zM2343 397h1v1h-1zM2361 397h1v1h-1zM2380 397h1v1h-1zM2398 397h1v1h-1zM2417 397h1v1h-1zM1243 416h1v1h-1zM1261 416h1v1h-1zM1280 416h1v1h-1zM1299 416h1v1h-1zM1317 416h1v1h-1zM1336 416h1v1h-1zM1355 416h1v1h-1zM1373 416h1v1h-1zM1392 416h1v1h-1zM1411 416h1v1h-1zM1429 416h1v1h-1zM1448 416h1v1h-1zM1466 416h1v1h-1zM1485 416h1v1h-1zM1504 416h1v1h-1zM1522 416h1v1h-1zM1541 416h1v1h-1zM1560 416h1v1h-1zM1578 416h1v1h-1zM1597 416h1v1h-1zM1616 416h1v1h-1zM1634 416h1v1h-1zM1653 416h1v1h-1zM1672 416h1v1h-1zM1690 416h1v1h-1zM1709 416h1v1h-1zM1727 416h1v1h-1zM1746 416h1v1h-1zM1765 416h1v1h-1zM1783 416h1v1h-1zM1802 416h1v1h-1zM1821 416h1v1h-1zM1839 416h1v1h-1zM1858 416h1v1h-1zM1877 416h1v1h-1zM1895 416h1v1h-1zM1914 416h1v1h-1zM1932 416h1v1h-1zM1951 416h1v1h-1zM1970 416h1v1h-1zM1988 416h1v1h-1zM2007 416h1v1h-1zM2026 416h1v1h-1zM2044 416h1v1h-1zM2063 416h1v1h-1zM2082 416h1v1h-1zM2100 416h1v1h-1zM2119 416h1v1h-1zM2138 416h1v1h-1zM2156 416h1v1h-1zM2175 416h1v1h-1zM2193 416h1v1h-1zM2212 416h1v1h-1zM2231 416h1v1h-1zM2249 416h1v1h-1zM2268 416h1v1h-1zM2287 416h1v1h-1zM2305 416h1v1h-1zM2324 416h1v1h-1zM2343 416h1v1h-1zM2361 416h1v1h-1zM2380 416h1v1h-1zM2398 416h1v1h-1zM2417 416h1v1h-1zM1243 435h1v1h-1zM1261 435h1v1h-1zM1280 435h1v1h-1zM1299 435h1v1h-1zM1317 435h1v1h-1zM1336 435h1v1h-1zM1355 435h1v1h-1zM1373 435h1v1h-1zM1392 435h1v1h-1zM1411 435h1v1h-1zM1429 435h1v1h-1zM1448 435h1v1h-1zM1466 435h1v1h-1zM1485 435h1v1h-1zM1504 435h1v1h-1zM1522 435h1v1h-1zM1541 435h1v1h-1zM1560 435h1v1h-1zM1578 435h1v1h-1zM1597 435h1v1h-1zM1616 435h1v1h-1zM1634 435h1v1h-1zM1653 435h1v1h-1zM1672 435h1v1h-1zM1690 435h1v1h-1zM1709 435h1v1h-1zM1727 435h1v1h-1zM1746 435h1v1h-1zM1765 435h1v1h-1zM1783 435h1v1h-1zM1802 435h1v1h-1zM1821 435h1v1h-1zM1839 435h1v1h-1zM1858 435h1v1h-1zM1877 435h1v1h-1zM1895 435h1v1h-1zM1914 435h1v1h-1zM1932 435h1v1h-1zM1951 435h1v1h-1zM1970 435h1v1h-1zM1988 435h1v1h-1zM2007 435h1v1h-1zM2026 435h1v1h-1zM2044 435h1v1h-1zM2063 435h1v1h-1zM2082 435h1v1h-1zM2100 435h1v1h-1zM2119 435h1v1h-1zM2138 435h1v1h-1zM2156 435h1v1h-1zM2175 435h1v1h-1zM2193 435h1v1h-1zM2212 435h1v1h-1zM2231 435h1v1h-1zM2249 435h1v1h-1zM2268 435h1v1h-1zM2287 435h1v1h-1zM2305 435h1v1h-1zM2324 435h1v1h-1zM2343 435h1v1h-1zM2361 435h1v1h-1zM2380 435h1v1h-1zM2398 435h1v1h-1zM2417 435h1v1h-1zM1243 453h1v1h-1zM1261 453h1v1h-1zM1280 453h1v1h-1zM1299 453h1v1h-1zM1317 453h1v1h-1zM1336 453h1v1h-1zM1355 453h1v1h-1zM1373 453h1v1h-1zM1392 453h1v1h-1zM1411 453h1v1h-1zM1429 453h1v1h-1zM1448 453h1v1h-1zM1466 453h1v1h-1zM1485 453h1v1h-1zM1504 453h1v1h-1zM1522 453h1v1h-1zM1541 453h1v1h-1zM1560 453h1v1h-1zM1578 453h1v1h-1zM1597 453h1v1h-1zM1616 453h1v1h-1zM1634 453h1v1h-1zM1653 453h1v1h-1zM1672 453h1v1h-1zM1690 453h1v1h-1zM1709 453h1v1h-1zM1727 453h1v1h-1zM1746 453h1v1h-1zM1765 453h1v1h-1zM1783 453h1v1h-1zM1802 453h1v1h-1zM1821 453h1v1h-1zM1839 453h1v1h-1zM1858 453h1v1h-1zM1877 453h1v1h-1zM1895 453h1v1h-1zM1914 453h1v1h-1zM1932 453h1v1h-1zM1951 453h1v1h-1zM1970 453h1v1h-1zM1988 453h1v1h-1zM2007 453h1v1h-1zM2026 453h1v1h-1zM2044 453h1v1h-1zM2063 453h1v1h-1zM2082 453h1v1h-1zM2100 453h1v1h-1zM2119 453h1v1h-1zM2138 453h1v1h-1zM2156 453h1v1h-1zM2175 453h1v1h-1zM2193 453h1v1h-1zM2212 453h1v1h-1zM2231 453h1v1h-1zM2249 453h1v1h-1zM2268 453h1v1h-1zM2287 453h1v1h-1zM2305 453h1v1h-1zM2324 453h1v1h-1zM2343 453h1v1h-1zM2361 453h1v1h-1zM2380 453h1v1h-1zM2398 453h1v1h-1zM2417 453h1v1h-1zM1243 472h1v1h-1zM1261 472h1v1h-1zM1280 472h1v1h-1zM1299 472h1v1h-1zM1317 472h1v1h-1zM1336 472h1v1h-1zM1355 472h1v1h-1zM1373 472h1v1h-1zM1392 472h1v1h-1zM1411 472h1v1h-1zM1429 472h1v1h-1zM1448 472h1v1h-1zM1466 472h1v1h-1zM1485 472h1v1h-1zM1504 472h1v1h-1zM1522 472h1v1h-1zM1541 472h1v1h-1zM1560 472h1v1h-1zM1578 472h1v1h-1zM1597 472h1v1h-1zM1616 472h1v1h-1zM1634 472h1v1h-1zM1653 472h1v1h-1zM1672 472h1v1h-1zM1690 472h1v1h-1zM1709 472h1v1h-1zM1727 472h1v1h-1zM1746 472h1v1h-1zM1765 472h1v1h-1zM1783 472h1v1h-1zM1802 472h1v1h-1zM1821 472h1v1h-1zM1839 472h1v1h-1zM1858 472h1v1h-1zM1877 472h1v1h-1zM1895 472h1v1h-1zM1914 472h1v1h-1zM1932 472h1v1h-1zM1951 472h1v1h-1zM1970 472h1v1h-1zM1988 472h1v1h-1zM2007 472h1v1h-1zM2026 472h1v1h-1zM2044 472h1v1h-1zM2063 472h1v1h-1zM2082 472h1v1h-1zM2100 472h1v1h-1zM2119 472h1v1h-1zM2138 472h1v1h-1zM2156 472h1v1h-1zM2175 472h1v1h-1zM2193 472h1v1h-1zM2212 472h1v1h-1zM2231 472h1v1h-1zM2249 472h1v1h-1zM2268 472h1v1h-1zM2287 472h1v1h-1zM2305 472h1v1h-1zM2324 472h1v1h-1zM2343 472h1v1h-1zM2361 472h1v1h-1zM2380 472h1v1h-1zM2398 472h1v1h-1zM2417 472h1v1h-1zM1243 491h1v1h-1zM1261 491h1v1h-1zM1280 491h1v1h-1zM1299 491h1v1h-1zM1317 491h1v1h-1zM1336 491h1v1h-1zM1355 491h1v1h-1zM1373 491h1v1h-1zM1392 491h1v1h-1zM1411 491h1v1h-1zM1429 491h1v1h-1zM1448 491h1v1h-1zM1466 491h1v1h-1zM1485 491h1v1h-1zM1504 491h1v1h-1zM1522 491h1v1h-1zM1541 491h1v1h-1zM1560 491h1v1h-1zM1578 491h1v1h-1zM1597 491h1v1h-1zM1616 491h1v1h-1zM1634 491h1v1h-1zM1653 491h1v1h-1zM1672 491h1v1h-1zM1690 491h1v1h-1zM1709 491h1v1h-1zM1727 491h1v1h-1zM1746 491h1v1h-1zM1765 491h1v1h-1zM1783 491h1v1h-1zM1802 491h1v1h-1zM1821 491h1v1h-1zM1839 491h1v1h-1zM1858 491h1v1h-1zM1877 491h1v1h-1zM1895 491h1v1h-1zM1914 491h1v1h-1zM1932 491h1v1h-1zM1951 491h1v1h-1zM1970 491h1v1h-1zM1988 491h1v1h-1zM2007 491h1v1h-1zM2026 491h1v1h-1zM2044 491h1v1h-1zM2063 491h1v1h-1zM2082 491h1v1h-1zM2100 491h1v1h-1zM2119 491h1v1h-1zM2138 491h1v1h-1zM2156 491h1v1h-1zM2175 491h1v1h-1zM2193 491h1v1h-1zM2212 491h1v1h-1zM2231 491h1v1h-1zM2249 491h1v1h-1zM2268 491h1v1h-1zM2287 491h1v1h-1zM2305 491h1v1h-1zM2324 491h1v1h-1zM2343 491h1v1h-1zM2361 491h1v1h-1zM2380 491h1v1h-1zM2398 491h1v1h-1zM2417 491h1v1h-1zM1243 509h1v1h-1zM1261 509h1v1h-1zM1280 509h1v1h-1zM1299 509h1v1h-1zM1317 509h1v1h-1zM1336 509h1v1h-1zM1355 509h1v1h-1zM1373 509h1v1h-1zM1392 509h1v1h-1zM1411 509h1v1h-1zM1429 509h1v1h-1zM1448 509h1v1h-1zM1466 509h1v1h-1zM1485 509h1v1h-1zM1504 509h1v1h-1zM1522 509h1v1h-1zM1541 509h1v1h-1zM1560 509h1v1h-1zM1578 509h1v1h-1zM1597 509h1v1h-1zM1616 509h1v1h-1zM1634 509h1v1h-1zM1653 509h1v1h-1zM1672 509h1v1h-1zM1690 509h1v1h-1zM1709 509h1v1h-1zM1727 509h1v1h-1zM1746 509h1v1h-1zM1765 509h1v1h-1zM1783 509h1v1h-1zM1802 509h1v1h-1zM1821 509h1v1h-1zM1839 509h1v1h-1zM1858 509h1v1h-1zM1877 509h1v1h-1zM1895 509h1v1h-1zM1914 509h1v1h-1zM1932 509h1v1h-1zM1951 509h1v1h-1zM1970 509h1v1h-1zM1988 509h1v1h-1zM2007 509h1v1h-1zM2026 509h1v1h-1zM2044 509h1v1h-1zM2063 509h1v1h-1zM2082 509h1v1h-1zM2100 509h1v1h-1zM2119 509h1v1h-1zM2138 509h1v1h-1zM2156 509h1v1h-1zM2175 509h1v1h-1zM2193 509h1v1h-1zM2212 509h1v1h-1zM2231 509h1v1h-1zM2249 509h1v1h-1zM2268 509h1v1h-1zM2287 509h1v1h-1zM2305 509h1v1h-1zM2324 509h1v1h-1zM2343 509h1v1h-1zM2361 509h1v1h-1zM2380 509h1v1h-1zM2398 509h1v1h-1zM2417 509h1v1h-1zM1243 528h1v1h-1zM1261 528h1v1h-1zM1280 528h1v1h-1zM1299 528h1v1h-1zM1317 528h1v1h-1zM1336 528h1v1h-1zM1355 528h1v1h-1zM1373 528h1v1h-1zM1392 528h1v1h-1zM1411 528h1v1h-1zM1429 528h1v1h-1zM1448 528h1v1h-1zM1466 528h1v1h-1zM1485 528h1v1h-1zM1504 528h1v1h-1zM1522 528h1v1h-1zM1541 528h1v1h-1zM1560 528h1v1h-1zM1578 528h1v1h-1zM1597 528h1v1h-1zM1616 528h1v1h-1zM1634 528h1v1h-1zM1653 528h1v1h-1zM1672 528h1v1h-1zM1690 528h1v1h-1zM1709 528h1v1h-1zM1727 528h1v1h-1zM1746 528h1v1h-1zM1765 528h1v1h-1zM1783 528h1v1h-1zM1802 528h1v1h-1zM1821 528h1v1h-1zM1839 528h1v1h-1zM1858 528h1v1h-1zM1877 528h1v1h-1zM1895 528h1v1h-1zM1914 528h1v1h-1zM1932 528h1v1h-1zM1951 528h1v1h-1zM1970 528h1v1h-1zM1988 528h1v1h-1zM2007 528h1v1h-1zM2026 528h1v1h-1zM2044 528h1v1h-1zM2063 528h1v1h-1zM2082 528h1v1h-1zM2100 528h1v1h-1zM2119 528h1v1h-1zM2138 528h1v1h-1zM2156 528h1v1h-1zM2175 528h1v1h-1zM2193 528h1v1h-1zM2212 528h1v1h-1zM2231 528h1v1h-1zM2249 528h1v1h-1zM2268 528h1v1h-1zM2287 528h1v1h-1zM2305 528h1v1h-1zM2324 528h1v1h-1zM2343 528h1v1h-1zM2361 528h1v1h-1zM2380 528h1v1h-1zM2398 528h1v1h-1zM2417 528h1v1h-1zM1243 547h1v1h-1zM1261 547h1v1h-1zM1280 547h1v1h-1zM1299 547h1v1h-1zM1317 547h1v1h-1zM1336 547h1v1h-1zM1355 547h1v1h-1zM1373 547h1v1h-1zM1392 547h1v1h-1zM1411 547h1v1h-1zM1429 547h1v1h-1zM1448 547h1v1h-1zM1466 547h1v1h-1zM1485 547h1v1h-1zM1504 547h1v1h-1zM1522 547h1v1h-1zM1541 547h1v1h-1zM1560 547h1v1h-1zM1578 547h1v1h-1zM1597 547h1v1h-1zM1616 547h1v1h-1zM1634 547h1v1h-1zM1653 547h1v1h-1zM1672 547h1v1h-1zM1690 547h1v1h-1zM1709 547h1v1h-1zM1727 547h1v1h-1zM1746 547h1v1h-1zM1765 547h1v1h-1zM1783 547h1v1h-1zM1802 547h1v1h-1zM1821 547h1v1h-1zM1839 547h1v1h-1zM1858 547h1v1h-1zM1877 547h1v1h-1zM1895 547h1v1h-1zM1914 547h1v1h-1zM1932 547h1v1h-1zM1951 547h1v1h-1zM1970 547h1v1h-1zM1988 547h1v1h-1zM2007 547h1v1h-1zM2026 547h1v1h-1zM2044 547h1v1h-1zM2063 547h1v1h-1zM2082 547h1v1h-1zM2100 547h1v1h-1zM2119 547h1v1h-1zM2138 547h1v1h-1zM2156 547h1v1h-1zM2175 547h1v1h-1zM2193 547h1v1h-1zM2212 547h1v1h-1zM2231 547h1v1h-1zM2249 547h1v1h-1zM2268 547h1v1h-1zM2287 547h1v1h-1zM2305 547h1v1h-1zM2324 547h1v1h-1zM2343 547h1v1h-1zM2361 547h1v1h-1zM2380 547h1v1h-1zM2398 547h1v1h-1zM2417 547h1v1h-1zM1243 565h1v1h-1zM1261 565h1v1h-1zM1280 565h1v1h-1zM1299 565h1v1h-1zM1317 565h1v1h-1zM1336 565h1v1h-1zM1355 565h1v1h-1zM1373 565h1v1h-1zM1392 565h1v1h-1zM1411 565h1v1h-1zM1429 565h1v1h-1zM1448 565h1v1h-1zM1466 565h1v1h-1zM1485 565h1v1h-1zM1504 565h1v1h-1zM1522 565h1v1h-1zM1541 565h1v1h-1zM1560 565h1v1h-1zM1578 565h1v1h-1zM1597 565h1v1h-1zM1616 565h1v1h-1zM1634 565h1v1h-1zM1653 565h1v1h-1zM1672 565h1v1h-1zM1690 565h1v1h-1zM1709 565h1v1h-1zM1727 565h1v1h-1zM1746 565h1v1h-1zM1765 565h1v1h-1zM1783 565h1v1h-1zM1802 565h1v1h-1zM1821 565h1v1h-1zM1839 565h1v1h-1zM1858 565h1v1h-1zM1877 565h1v1h-1zM1895 565h1v1h-1zM1914 565h1v1h-1zM1932 565h1v1h-1zM1951 565h1v1h-1zM1970 565h1v1h-1zM1988 565h1v1h-1zM2007 565h1v1h-1zM2026 565h1v1h-1zM2044 565h1v1h-1zM2063 565h1v1h-1zM2082 565h1v1h-1zM2100 565h1v1h-1zM2119 565h1v1h-1zM2138 565h1v1h-1zM2156 565h1v1h-1zM2175 565h1v1h-1zM2193 565h1v1h-1zM2212 565h1v1h-1zM2231 565h1v1h-1zM2249 565h1v1h-1zM2268 565h1v1h-1zM2287 565h1v1h-1zM2305 565h1v1h-1zM2324 565h1v1h-1zM2343 565h1v1h-1zM2361 565h1v1h-1zM2380 565h1v1h-1zM2398 565h1v1h-1zM2417 565h1v1h-1z" fill="#000"/>
<line x1="1671" y1="304.5" x2="1848" y2="304.5" stroke="#0000ff" stroke-width="1.2" shape-rendering="auto"/>
<line x1="1922" y1="304.5" x2="2118.5" y2="304.5" stroke="#0000ff" stroke-width="1.2" shape-rendering="auto"/>
<line x1="1671.5" y1="304" x2="1671.5" y2="351" stroke="#0000ff" stroke-width="1.2" shape-rendering="auto"/>
<line x1="1671.5" y1="424" x2="1671.5" y2="509.5" stroke="#0000ff" stroke-width="1.2" shape-rendering="auto"/>
<line x1="1671" y1="509.5" x2="2118.5" y2="509.5" stroke="#0000ff" stroke-width="1.2" shape-rendering="auto"/>
<line x1="2118.5" y1="304" x2="2118.5" y2="351.6" stroke="#0000ff" stroke-width="1.2" shape-rendering="auto"/>
<line x1="2118.5" y1="425" x2="2118.5" y2="509.5" stroke="#0000ff" stroke-width="1.2" shape-rendering="auto"/>
<circle cx="1885" cy="304.5" r="36.5" fill="none" stroke="#000080" stroke-width="1.3" shape-rendering="auto"/>
<line x1="1862.5" y1="295" x2="1862.5" y2="315" stroke="#000080" stroke-width="1.2" shape-rendering="auto"/>
<line x1="1899" y1="304.5" x2="1919.5" y2="304.5" stroke="#000080" stroke-width="1.2" shape-rendering="auto"/>
<line x1="1909.5" y1="295" x2="1909.5" y2="315" stroke="#000080" stroke-width="1.2" shape-rendering="auto"/>
<circle cx="1671.5" cy="387.6" r="36.5" fill="none" stroke="#000080" stroke-width="1.3" shape-rendering="auto"/>
<line x1="1661.5" y1="365.7" x2="1681.5" y2="365.7" stroke="#000080" stroke-width="1.2" shape-rendering="auto"/>
<line x1="1671.5" y1="355.7" x2="1671.5" y2="375.7" stroke="#000080" stroke-width="1.2" shape-rendering="auto"/>
<line x1="1661.5" y1="411" x2="1681" y2="411" stroke="#000080" stroke-width="1.2" shape-rendering="auto"/>
<polyline points="2118.5,351.6 2137.3,360.4 2099.7,379.1 2137.3,397.6 2099.7,416.4 2118.5,425.2" fill="none" stroke="#000080" stroke-width="1.3" shape-rendering="auto"/>
<rect x="1871" y="504" width="11" height="11" fill="#0000ff"/>
<line x1="1876.5" y1="509.5" x2="1876.5" y2="546" stroke="#0000ff" stroke-width="1.2" shape-rendering="auto"/>
<polyline points="1855.5,546 1897.5,546 1876.5,566.5 1855.5,546" fill="none" stroke="#0000ff" stroke-width="1.2" shape-rendering="auto"/>
<text x="1867" y="261" font-size="26" fill="#000" font-weight="bold" letter-spacing="1.5" stroke="#000" stroke-width="0.6">V2</text>
<text x="1699" y="352" font-size="26" fill="#000" font-weight="bold" letter-spacing="1.5" stroke="#000" stroke-width="0.6">V1</text>
<text x="1791" y="368" font-size="27" fill="#000" font-weight="bold" letter-spacing="1.3" stroke="#000" stroke-width="0.6">SINE(0 1 9e4)</text>
<text x="1699" y="446" font-size="27" fill="#000" font-weight="bold" letter-spacing="1.3" stroke="#000" stroke-width="0.6">SINE(0 1 1e5)</text>
<text x="2142" y="380" font-size="26" fill="#000" font-weight="bold" letter-spacing="0.5" stroke="#000" stroke-width="0.6">R1</text>
<text x="2142" y="422" font-size="26" fill="#000" font-weight="bold" letter-spacing="2.5" stroke="#000" stroke-width="0.6">50</text>
<g shape-rendering="auto"><path d="M19.5,59.5 H33.5 L38.5,64.5 V80.5 H19.5 Z" fill="#fff" stroke="#000" stroke-width="1.6"/><path d="M33.5,59.5 V64.5 H38.5" fill="none" stroke="#000" stroke-width="1.2"/><path d="M24,64 L35,70.5 L24,77 Z" fill="#000"/></g>
<g shape-rendering="auto"><path d="M50.5,78 V65 L53.5,62 H57.5 L60.5,65 H65.5 V70" fill="#ffff90" stroke="#000" stroke-width="1.3"/><path d="M50.5,78.5 L57,70.5 H72 L65.5,78.5 Z" fill="#808000" stroke="#000" stroke-width="1.3"/><path d="M62.5,62 Q66.5,57.5 71,62" fill="none" stroke="#000" stroke-width="1.3"/><path d="M69,63.5 L72,64.5 L71.5,60.5 Z" fill="#000"/></g>
<g shape-rendering="auto"><rect x="89.5" y="59.5" width="19.5" height="19.5" fill="#808000" stroke="#000" stroke-width="1.3"/><rect x="92.5" y="60" width="12.5" height="9" fill="#fff" stroke="#000" stroke-width="1"/><rect x="92.5" y="72" width="14.5" height="7" fill="#000"/><rect x="102" y="74" width="2.5" height="3.5" fill="#fff"/><rect x="106" y="60.5" width="2" height="2" fill="#fff"/></g>
<g shape-rendering="auto"><path d="M126.5,62 L129.5,61 L131,62 L133,61.5 L135,59.5 H141.5 L145,61.5 L149.5,65.5 V70.5 L147,67.5 L144,66.5 L142,68 L133,68.5 L131,67 L129,68.5 L126.5,68 Z" fill="#f4f4f4" stroke="#000" stroke-width="1.2"/><rect x="137" y="69" width="4.2" height="6.5" fill="#0000ff"/><rect x="137" y="69" width="2" height="6.5" fill="#000090"/><rect x="135" y="75" width="7" height="6" fill="#0000ff"/><rect x="135" y="75" width="3.2" height="6" fill="#000090"/></g>
<g shape-rendering="auto"><g fill="none" stroke="#a0a0a0" stroke-width="2.2" stroke-linejoin="round"><path d="M166,79.5 V77 L171,74.5 L175,71 L179,66 L182,62"/><path d="M177,72 L180,74 L178,79 V81"/><path d="M171,65.5 L176,64.5 L180,65 L183,70 L188,68"/><path d="M168,59 L172,61 M165.5,62 L169,64.5" stroke-width="1.3"/></g><rect x="181" y="59" width="6" height="4" fill="#a0a0a0"/><rect x="183" y="60" width="2" height="2" fill="#f0f0f0"/></g>
<g shape-rendering="auto"><g fill="none" stroke="#a0a0a0" stroke-width="1.5"><path d="M203.8,72 V62.5 M206.8,71.5 V59.8 M210.2,71.5 V59.8 M213.2,71.5 V63.5"/><path d="M203.8,62.3 L205,61 L206.8,60 L208.5,59.5 L210.2,60 L212,61.5 L214.5,63.5 L216,65.5 V80.3 H203.5 L198.5,70.5 L200.5,69.5 L203.5,72"/></g></g>
<g shape-rendering="auto"><circle cx="245" cy="67" r="7.2" fill="#fff" stroke="#000" stroke-width="1.8"/><path d="M241,66 Q242,63 244,62" fill="none" stroke="#00e0ff" stroke-width="1.2"/><path d="M249,68 Q248,71 246,72" fill="none" stroke="#00e0ff" stroke-width="1.2"/><path d="M250.5,72.5 L257.5,79.5" stroke="#000" stroke-width="3.2" stroke-linecap="round"/><path d="M240.5,67 H249.5 M245,62.5 V71.5" stroke="#000" stroke-width="2.2"/></g>
<g shape-rendering="auto"><circle cx="276" cy="67" r="7.2" fill="#fff" stroke="#000" stroke-width="1.8"/><path d="M272,66 Q273,63 275,62" fill="none" stroke="#00e0ff" stroke-width="1.2"/><path d="M280,68 Q279,71 277,72" fill="none" stroke="#00e0ff" stroke-width="1.2"/><path d="M281.5,72.5 L288.5,79.5" stroke="#000" stroke-width="3.2" stroke-linecap="round"/></g>
<g shape-rendering="auto"><circle cx="307" cy="67" r="7.2" fill="#fff" stroke="#000" stroke-width="1.8"/><path d="M303,66 Q304,63 306,62" fill="none" stroke="#00e0ff" stroke-width="1.2"/><path d="M311,68 Q310,71 308,72" fill="none" stroke="#00e0ff" stroke-width="1.2"/><path d="M312.5,72.5 L319.5,79.5" stroke="#000" stroke-width="3.2" stroke-linecap="round"/><path d="M302.5,67 H311.5" stroke="#000" stroke-width="2.2"/></g>
<g shape-rendering="auto"><circle cx="337" cy="67" r="7.2" fill="#fff" stroke="#000" stroke-width="1.8"/><path d="M333,66 Q334,63 336,62" fill="none" stroke="#00e0ff" stroke-width="1.2"/><path d="M341,68 Q340,71 338,72" fill="none" stroke="#00e0ff" stroke-width="1.2"/><path d="M342.5,72.5 L349.5,79.5" stroke="#000" stroke-width="3.2" stroke-linecap="round"/><path d="M328.5,60 L345,79 M346,60.5 L328.5,74" stroke="#ff0000" stroke-width="2"/></g>
<g shape-rendering="auto"><path d="M369.5,59 V79 H392" fill="none" stroke="#000" stroke-width="1.5"/><path d="M367,61.5 H369" stroke="#000" stroke-width="1"/><path d="M374,79 V81" stroke="#000" stroke-width="1"/><path d="M367,65.5 H369" stroke="#000" stroke-width="1"/><path d="M379,79 V81" stroke="#000" stroke-width="1"/><path d="M367,69.5 H369" stroke="#000" stroke-width="1"/><path d="M384,79 V81" stroke="#000" stroke-width="1"/><path d="M367,73.5 H369" stroke="#000" stroke-width="1"/><path d="M389,79 V81" stroke="#000" stroke-width="1"/><path d="M367,77.5 H369" stroke="#000" stroke-width="1"/><path d="M394,79 V81" stroke="#000" stroke-width="1"/><path d="M370,64.5 L375.5,59.5 L380.5,64.5 L385.5,59.5 L391,64.5" fill="none" stroke="#000080" stroke-width="1"/><path d="M370,68.5 L373,66.5 L376,66.5 L378.5,68.5 L383,68.5 L385.5,70.5 L387.5,70.5 L390.5,68.5" fill="none" stroke="#ff0000" stroke-width="1.3"/><path d="M370,72.5 H376 V74.5 H379 V72.5 H387.5 V74.5 H391" fill="none" stroke="#000080" stroke-width="1.3"/></g>
<g shape-rendering="auto"><path d="M400.5,59 V79 H423" fill="none" stroke="#000" stroke-width="1.5"/><path d="M398,61.5 H400" stroke="#000" stroke-width="1"/><path d="M405,79 V81" stroke="#000" stroke-width="1"/><path d="M398,65.5 H400" stroke="#000" stroke-width="1"/><path d="M410,79 V81" stroke="#000" stroke-width="1"/><path d="M398,69.5 H400" stroke="#000" stroke-width="1"/><path d="M415,79 V81" stroke="#000" stroke-width="1"/><path d="M398,73.5 H400" stroke="#000" stroke-width="1"/><path d="M420,79 V81" stroke="#000" stroke-width="1"/><path d="M398,77.5 H400" stroke="#000" stroke-width="1"/><path d="M425,79 V81" stroke="#000" stroke-width="1"/><path d="M406,63 Q410,60 417,59.5 M406,72 Q410,75 417,77" fill="none" stroke="#ff0000" stroke-width="1.2"/><path d="M406.5,63.5 V71.5 M418.5,59.5 V77" stroke="#000" stroke-width="1.1"/><path d="M404.5,65 L406.5,63 L408.5,65 M404.5,70 L406.5,72 L408.5,70 M415.5,62 L418.5,59.5 L421.5,62 M415.5,74 L418.5,77 L421.5,74" fill="none" stroke="#000" stroke-width="1"/></g>
<g shape-rendering="auto"><rect x="437.5" y="59.5" width="23" height="21" fill="#fff" stroke="#000080" stroke-width="1.3"/><rect x="437.5" y="59.5" width="23" height="3.5" fill="#000080"/><rect x="437.5" y="69" width="23" height="3.5" fill="#000080"/><rect x="439" y="60.5" width="1.5" height="1.5" fill="#fff"/><rect x="455" y="60.5" width="1.5" height="1.5" fill="#fff"/><rect x="458" y="60.5" width="1.5" height="1.5" fill="#fff"/><rect x="439" y="70" width="1.5" height="1.5" fill="#fff"/><rect x="455" y="70" width="1.5" height="1.5" fill="#fff"/><rect x="458" y="70" width="1.5" height="1.5" fill="#fff"/></g>
<g shape-rendering="auto"><rect x="468.5" y="59.5" width="14" height="10" fill="#fff" stroke="#000080" stroke-width="1.2"/><rect x="468.5" y="59.5" width="14" height="2.5" fill="#000080"/><rect x="469.5" y="60" width="1.2" height="1.2" fill="#fff"/><rect x="473.5" y="65.5" width="13" height="10" fill="#fff" stroke="#000080" stroke-width="1.2"/><rect x="473.5" y="65.5" width="13" height="2.5" fill="#000080"/><rect x="474.5" y="66" width="1.2" height="1.2" fill="#fff"/><rect x="477.5" y="71.5" width="14" height="9" fill="#fff" stroke="#000080" stroke-width="1.2"/><rect x="477.5" y="71.5" width="14" height="2.5" fill="#000080"/><rect x="478.5" y="72" width="1.2" height="1.2" fill="#fff"/></g>
<g shape-rendering="auto"><rect x="499.5" y="59.5" width="11" height="10" fill="#fff" stroke="#000080" stroke-width="1.2"/><rect x="499.5" y="59.5" width="11" height="2.5" fill="#000080"/><rect x="500.5" y="60" width="1.2" height="1.2" fill="#fff"/><rect x="504.5" y="65.5" width="10" height="10" fill="#fff" stroke="#000080" stroke-width="1.2"/><rect x="504.5" y="65.5" width="10" height="2.5" fill="#000080"/><rect x="505.5" y="66" width="1.2" height="1.2" fill="#fff"/><rect x="508.5" y="71.5" width="12" height="9" fill="#fff" stroke="#000080" stroke-width="1.2"/><rect x="508.5" y="71.5" width="12" height="2.5" fill="#000080"/><rect x="509.5" y="72" width="1.2" height="1.2" fill="#fff"/><path d="M518,61 L516.5,59.5 L518,65 M516.5,59.5 L521,59.5 M517,60 L522,66" fill="none" stroke="#000" stroke-width="1.2"/></g>
<g shape-rendering="auto"><path d="M547.5,59.5 L551,72 M555.5,59.5 L551.5,72" stroke="#000" stroke-width="1.4"/><ellipse cx="547" cy="76.5" rx="2.6" ry="3" fill="none" stroke="#000080" stroke-width="1.4"/><ellipse cx="554.5" cy="74.5" rx="2.3" ry="3" fill="none" stroke="#000080" stroke-width="1.4"/><path d="M550.5,70 L549,74 M552,70 L553,72" stroke="#000080" stroke-width="1.4"/></g>
<g shape-rendering="auto"><path d="M571.5,59.5 H579 L582.5,63 V73.5 H571.5 Z" fill="#fff" stroke="#000" stroke-width="1.2"/><path d="M573.5,64.5 H576 M573.5,67.5 H580 M573.5,70 H580" stroke="#000" stroke-width="1"/><path d="M580.5,64.5 H588 L592.5,69 V78.5 H580.5 Z" fill="#fff" stroke="#000080" stroke-width="1.2"/><path d="M583,68.5 H585.5 M583,71.5 H590 M583,74.5 H590" stroke="#000" stroke-width="1"/></g>
<g shape-rendering="auto"><rect x="602" y="61" width="12" height="17" rx="1.5" fill="#a0a0a0"/><rect x="605" y="59" width="6" height="3" fill="#a0a0a0"/><path d="M611.5,69.5 H620 L624,73 V79.5 H611.5 Z" fill="#f0f0f0" stroke="#a0a0a0" stroke-width="1.2"/><path d="M614,71.5 H617 M614,75 H621" stroke="#a0a0a0" stroke-width="1"/></g>
<g shape-rendering="auto"><path d="M632,81 V69 L634,67 V64 L636,62 V60 H640 V64 L642,67 L643,69.5 H644 L645,67 L647,64 V60 H651 V64 L653,67 L655,69 V81 H647.5 V75 H642.5 V81 Z" fill="#000"/><rect x="636.5" y="69.5" width="1.8" height="3.5" fill="#fff"/><rect x="645" y="69.5" width="1.8" height="3.5" fill="#fff"/><rect x="634" y="75" width="1.8" height="2.5" fill="#fff"/><rect x="649" y="75" width="1.8" height="2.5" fill="#fff"/><rect x="637" y="62" width="1.8" height="1.8" fill="#fff"/><rect x="647.5" y="62" width="1.8" height="1.8" fill="#fff"/></g>
<g shape-rendering="auto"><path d="M678.5,66.5 V60.5 H688 L691.5,64 V67" fill="#e8e8e8" stroke="#000" stroke-width="1.3"/><path d="M672.5,78.5 V71 L676,67.5 H693.5 V78.5 Z" fill="#e0e0e0" stroke="#000" stroke-width="1.3"/><path d="M678,78.5 V80.5 H691 V78.5" fill="none" stroke="#000" stroke-width="1.2"/></g>
<g shape-rendering="auto"><path d="M702,78.5 V68 L705,65.5 H724 V75.5 L720,79.5 H702 Z" fill="#fff" stroke="#000" stroke-width="1.3"/><path d="M702,72.5 H720 V79 M720,72.5 L724,68.5 M702,76 H720 L724,72" fill="none" stroke="#000" stroke-width="1.1"/><path d="M707,67 L709,59.5 H724 L722,67" fill="#fff" stroke="#000" stroke-width="1.3"/><path d="M711,62 H719 M710.5,64.5 H718" stroke="#000" stroke-width="1"/><rect x="711" y="73.5" width="5" height="1.3" fill="#e0d000"/></g>
<g shape-rendering="auto"><path d="M743,76.5 L753.5,61 Q755,59 757,60.5 Q758,62 757,63.5 L746,78.5 Z" fill="#a0a0a0"/><path d="M743,78.5 H762" stroke="#a0a0a0" stroke-width="1.3"/></g>
<g shape-rendering="auto"><path d="M782,59 V69.5 M771.5,69.5 H794 L782.5,80.5 Z" fill="none" stroke="#a0a0a0" stroke-width="1.6"/></g>
<g shape-rendering="auto"><path d="M804,60.5 H821.5 L824,63 V73 L821.5,75.5 H804 L802,73 V63 Z" fill="none" stroke="#a0a0a0" stroke-width="2.2"/><path d="M813,75.5 V81" stroke="#a0a0a0" stroke-width="1.6"/><path d="M810,72 V65 L811,63.5 H815 L816.5,65 V72 M810,68 H816.5" fill="none" stroke="#a0a0a0" stroke-width="1.6"/></g>
<g shape-rendering="auto"><path d="M845,59 V62 L852.5,65.5 L837,73.5 L843,77 V81" fill="none" stroke="#a0a0a0" stroke-width="1.6"/></g>
<g shape-rendering="auto"><path d="M875,59 V68 M875,75 V81" stroke="#a0a0a0" stroke-width="1.6"/><rect x="867" y="67" width="16" height="2.5" fill="#a0a0a0"/><rect x="867" y="72" width="16" height="2.5" fill="#a0a0a0"/></g>
<g shape-rendering="auto"><path d="M903,59.5 Q907.5,60 907.5,64 Q907.5,68 903,69.5 Q907.5,70 907.5,75 Q907.5,80 903,80.5" fill="none" stroke="#a0a0a0" stroke-width="2"/></g>
<g shape-rendering="auto"><path d="M939,59 V63.5 M939,75 V81 M927.5,63.5 H950 M927.5,75.5 H950 M929,64 L939,74.5 L949,64" fill="none" stroke="#a0a0a0" stroke-width="1.7"/></g>
<g shape-rendering="auto"><path d="M962,62.5 H968 Q975,62.5 974.5,70 Q974,77 968,77 H962 Z" fill="none" stroke="#a0a0a0" stroke-width="2.2"/><path d="M957,66 H962 M957,74 H962 M975,70 H981" stroke="#a0a0a0" stroke-width="1.6"/></g>
<g shape-rendering="auto"><path d="M989,70 L992,73.5 L997,79.5 H1005 L1010,73.5 V66 L1008,63 M992,73 V70 L991.5,61 L994,59.5 L996,60 L997.5,67 M999,66 L1001,60 L1003,59.5 L1005,62 L1003,70 M1006,64 L1004,70 M1009,66 L1007,71" fill="none" stroke="#a0a0a0" stroke-width="1.6"/></g>
<g shape-rendering="auto"><path d="M1021,68.5 L1023,66.5 L1024.5,66 L1026,71 M1024.5,66 L1026,62.5 L1028.5,62.5 L1029,70 M1031,62.5 V70 M1032,63 L1034.5,65 L1035,70 L1033,74.5 V79.5 H1025 V75 L1021,70" fill="none" stroke="#a0a0a0" stroke-width="1.6"/></g>
<g shape-rendering="auto"><path d="M1055.5,68 L1060,63.5 Q1064,60.5 1068,63 Q1072,67 1071,72 Q1069,78 1063,78.5 Q1060,78.5 1058.5,77" fill="none" stroke="#000" stroke-width="1.6"/><path d="M1062,62.5 Q1066,61.5 1069,64.5 M1070.5,69 Q1071,72 1070,73" fill="none" stroke="#b8a000" stroke-width="1.2"/><path d="M1052.5,65 V72 H1059" fill="none" stroke="#000" stroke-width="1.8"/></g>
<g shape-rendering="auto"><path d="M1101,69 L1096,63.5 Q1092,60.5 1087,62.5 Q1082.5,66.5 1083.5,72 Q1085.5,78 1091.5,78.5 Q1095,78.5 1097,77" fill="none" stroke="#a0a0a0" stroke-width="1.8"/><path d="M1095,67.5 L1102.5,71.5 V63.5" fill="none" stroke="#a0a0a0" stroke-width="1.8"/></g>
<g shape-rendering="auto"><path d="M1121,68.5 H1113 V80 H1120 M1113,74.5 H1118 M1123,77 V71 H1136 V77 M1129.5,71 V76" fill="none" stroke="#a0a0a0" stroke-width="2"/><path d="M1115,65 L1119,59.5 H1128 L1133,64.5 M1129,64.5 H1133 V61" fill="none" stroke="#a0a0a0" stroke-width="1"/></g>
<g shape-rendering="auto"><path d="M1151,68.5 H1144 V80 H1151 M1144,74.5 H1149 M1160,68.5 H1166 V80 H1160 M1161,74.5 H1166" fill="none" stroke="#a0a0a0" stroke-width="2"/><path d="M1146,65 L1150,59.5 H1160 L1164,64.5 M1160,64.5 H1164 V61" fill="none" stroke="#a0a0a0" stroke-width="1"/></g>
<text x="1174" y="78" font-size="17" font-weight="bold" font-style="italic" fill="#a0a0a0" stroke="#a0a0a0" stroke-width="0.6" letter-spacing="-1">Aa</text>
<text x="1204.5" y="76" font-size="15" font-weight="bold" fill="#a0a0a0" stroke="#a0a0a0" stroke-width="0.4" letter-spacing="-0.6">.op</text>
</svg></body></html>
